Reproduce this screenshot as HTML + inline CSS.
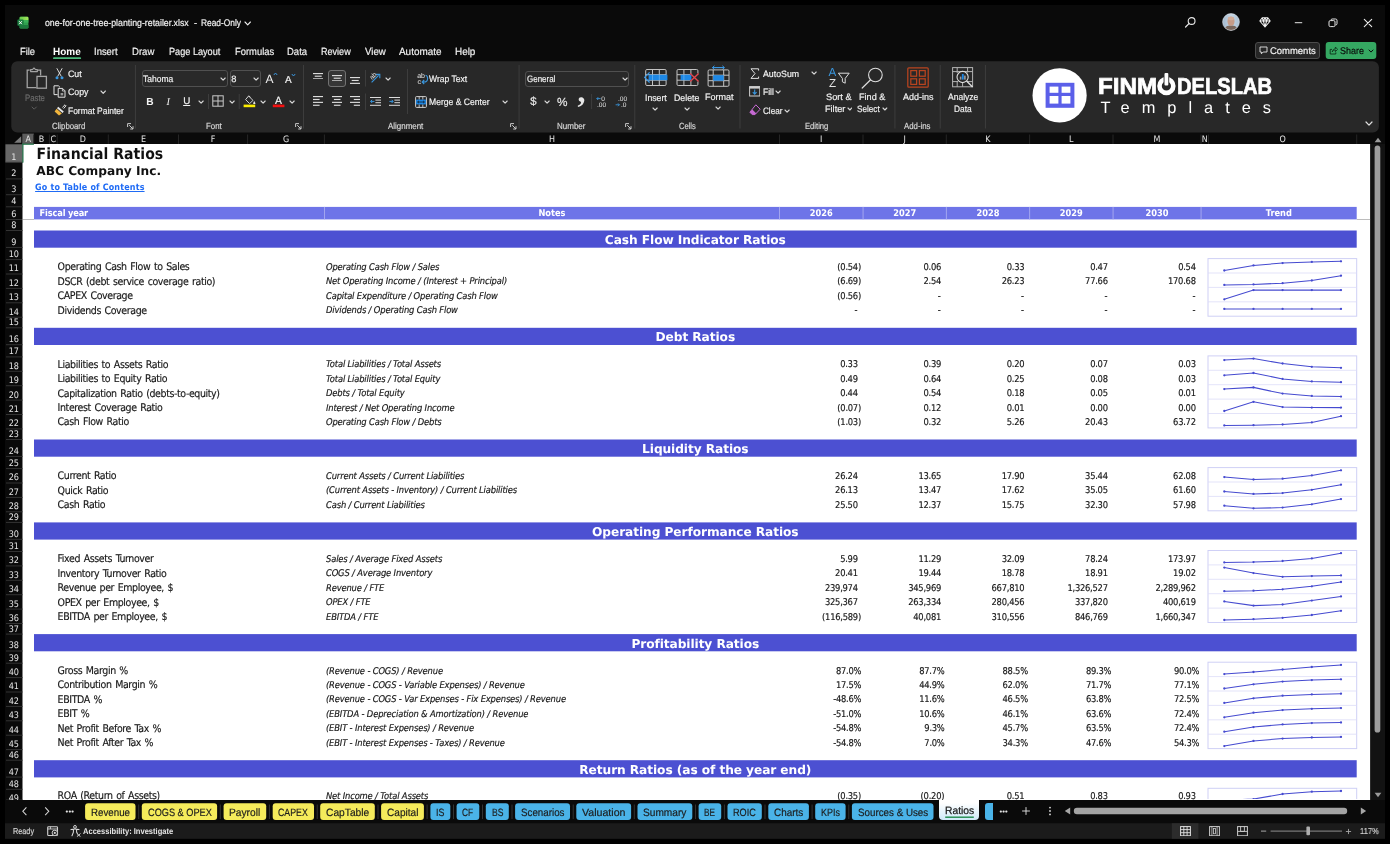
<!DOCTYPE html>
<html lang="en"><head><meta charset="utf-8"><title>Financial Ratios - Excel</title>
<style>
html,body{margin:0;padding:0}
body{width:1390px;height:844px;overflow:hidden;background:#000;position:relative}
#root{position:absolute;left:0;top:0;width:1390px;height:844px;will-change:transform}
#root>div,#root>svg,#root>span{position:absolute;display:block}
.t{white-space:nowrap;line-height:20px;height:20px;text-rendering:geometricPrecision}
svg text{text-rendering:geometricPrecision}

</style></head>
<body>
<div id="root">
<svg style="left:0;top:0" width="1390" height="844" viewBox="0 0 1390 844"><rect x="5.00" y="5.00" width="1380.00" height="834.00" fill="#0a0a0a"/><rect x="11.30" y="61.30" width="1367.60" height="71.20" rx="6" fill="#282828"/><rect x="22.50" y="144.00" width="1348.00" height="656.00" fill="#fff"/><rect x="5.00" y="823.20" width="1380.00" height="15.60" fill="#1b1b1b"/><rect x="22.30" y="133.60" width="11.60" height="10.40" fill="#5c5c5c"/><rect x="33.20" y="134.50" width="1.00" height="9.50" fill="#262626"/><rect x="48.90" y="134.50" width="1.00" height="9.50" fill="#262626"/><rect x="56.70" y="134.50" width="1.00" height="9.50" fill="#262626"/><rect x="107.80" y="134.50" width="1.00" height="9.50" fill="#262626"/><rect x="178.00" y="134.50" width="1.00" height="9.50" fill="#262626"/><rect x="247.10" y="134.50" width="1.00" height="9.50" fill="#262626"/><rect x="323.90" y="134.50" width="1.00" height="9.50" fill="#262626"/><rect x="779.00" y="134.50" width="1.00" height="9.50" fill="#262626"/><rect x="862.50" y="134.50" width="1.00" height="9.50" fill="#262626"/><rect x="945.80" y="134.50" width="1.00" height="9.50" fill="#262626"/><rect x="1029.10" y="134.50" width="1.00" height="9.50" fill="#262626"/><rect x="1112.50" y="134.50" width="1.00" height="9.50" fill="#262626"/><rect x="1200.50" y="134.50" width="1.00" height="9.50" fill="#262626"/><rect x="1208.00" y="134.50" width="1.00" height="9.50" fill="#262626"/><rect x="1356.20" y="134.50" width="1.00" height="9.50" fill="#262626"/></svg>
<svg style="left:12.0px;top:134.0px;" width="11" height="10" viewBox="0 0 11 10"><path d="M9.2 2.2 L9.2 8.7 L2.2 8.7 Z" fill="#7a7a7a"/></svg>
<svg style="left:0;top:0" width="1390" height="844" viewBox="0 0 1390 844"><rect x="5.40" y="144.30" width="16.80" height="18.20" fill="#676767"/><rect x="6.00" y="161.80" width="16.50" height="1.00" fill="#333"/><rect x="6.00" y="178.40" width="16.50" height="1.00" fill="#333"/><rect x="6.00" y="194.20" width="16.50" height="1.00" fill="#333"/><rect x="6.00" y="206.30" width="16.50" height="1.00" fill="#333"/><rect x="6.00" y="219.00" width="16.50" height="1.00" fill="#333"/><rect x="6.00" y="230.00" width="16.50" height="1.00" fill="#333"/><rect x="6.00" y="246.90" width="16.50" height="1.00" fill="#333"/><rect x="6.00" y="259.10" width="16.50" height="1.00" fill="#333"/><rect x="6.00" y="273.50" width="16.50" height="1.00" fill="#333"/><rect x="6.00" y="287.90" width="16.50" height="1.00" fill="#333"/><rect x="6.00" y="302.30" width="16.50" height="1.00" fill="#333"/><rect x="6.00" y="316.70" width="16.50" height="1.00" fill="#333"/><rect x="6.00" y="327.30" width="16.50" height="1.00" fill="#333"/><rect x="6.00" y="344.20" width="16.50" height="1.00" fill="#333"/><rect x="6.00" y="356.40" width="16.50" height="1.00" fill="#333"/><rect x="6.00" y="370.80" width="16.50" height="1.00" fill="#333"/><rect x="6.00" y="385.20" width="16.50" height="1.00" fill="#333"/><rect x="6.00" y="399.60" width="16.50" height="1.00" fill="#333"/><rect x="6.00" y="414.00" width="16.50" height="1.00" fill="#333"/><rect x="6.00" y="428.40" width="16.50" height="1.00" fill="#333"/><rect x="6.00" y="439.00" width="16.50" height="1.00" fill="#333"/><rect x="6.00" y="455.90" width="16.50" height="1.00" fill="#333"/><rect x="6.00" y="468.10" width="16.50" height="1.00" fill="#333"/><rect x="6.00" y="482.50" width="16.50" height="1.00" fill="#333"/><rect x="6.00" y="496.90" width="16.50" height="1.00" fill="#333"/><rect x="6.00" y="511.30" width="16.50" height="1.00" fill="#333"/><rect x="6.00" y="521.90" width="16.50" height="1.00" fill="#333"/><rect x="6.00" y="538.80" width="16.50" height="1.00" fill="#333"/><rect x="6.00" y="551.00" width="16.50" height="1.00" fill="#333"/><rect x="6.00" y="565.40" width="16.50" height="1.00" fill="#333"/><rect x="6.00" y="579.80" width="16.50" height="1.00" fill="#333"/><rect x="6.00" y="594.20" width="16.50" height="1.00" fill="#333"/><rect x="6.00" y="608.60" width="16.50" height="1.00" fill="#333"/><rect x="6.00" y="623.00" width="16.50" height="1.00" fill="#333"/><rect x="6.00" y="633.60" width="16.50" height="1.00" fill="#333"/><rect x="6.00" y="650.50" width="16.50" height="1.00" fill="#333"/><rect x="6.00" y="662.70" width="16.50" height="1.00" fill="#333"/><rect x="6.00" y="677.10" width="16.50" height="1.00" fill="#333"/><rect x="6.00" y="691.50" width="16.50" height="1.00" fill="#333"/><rect x="6.00" y="705.90" width="16.50" height="1.00" fill="#333"/><rect x="6.00" y="720.30" width="16.50" height="1.00" fill="#333"/><rect x="6.00" y="734.70" width="16.50" height="1.00" fill="#333"/><rect x="6.00" y="749.10" width="16.50" height="1.00" fill="#333"/><rect x="6.00" y="759.70" width="16.50" height="1.00" fill="#333"/><rect x="6.00" y="776.60" width="16.50" height="1.00" fill="#333"/><rect x="6.00" y="788.80" width="16.50" height="1.00" fill="#333"/><rect x="6.00" y="799.50" width="16.50" height="1.00" fill="#333"/><rect x="22.30" y="143.60" width="11.60" height="1.20" fill="#1e7145"/><rect x="22.30" y="143.60" width="1.20" height="19.00" fill="#1e7145"/><rect x="34.00" y="206.90" width="1322.70" height="12.50" fill="#6e74e8"/><rect x="324.00" y="206.90" width="0.90" height="12.50" fill="#a9abf0"/><rect x="779.10" y="206.90" width="0.90" height="12.50" fill="#a9abf0"/><rect x="862.60" y="206.90" width="0.90" height="12.50" fill="#a9abf0"/><rect x="945.90" y="206.90" width="0.90" height="12.50" fill="#a9abf0"/><rect x="1029.20" y="206.90" width="0.90" height="12.50" fill="#a9abf0"/><rect x="1112.60" y="206.90" width="0.90" height="12.50" fill="#a9abf0"/><rect x="1200.60" y="206.90" width="0.90" height="12.50" fill="#a9abf0"/><rect x="22.50" y="219.00" width="11.50" height="0.90" fill="#b5b5b5"/><rect x="1356.70" y="219.00" width="13.80" height="0.90" fill="#b5b5b5"/><rect x="34.00" y="230.50" width="1322.70" height="17.20" fill="#4c50d2"/><rect x="34.00" y="327.80" width="1322.70" height="17.20" fill="#4c50d2"/><rect x="34.00" y="439.50" width="1322.70" height="17.20" fill="#4c50d2"/><rect x="34.00" y="522.40" width="1322.70" height="17.20" fill="#4c50d2"/><rect x="34.00" y="634.10" width="1322.70" height="17.20" fill="#4c50d2"/><rect x="34.00" y="760.20" width="1322.70" height="17.20" fill="#4c50d2"/></svg>
<svg style="left:0;top:-0.6px" width="1390" height="800" viewBox="0 0 1390 800"><rect x="1208" y="259.6" width="148.7" height="57.6" fill="none" stroke="#cfd0f6" stroke-width="1"/><line x1="1208" y1="274.0" x2="1356.7" y2="274.0" stroke="#dcdcf8" stroke-width="0.8"/><line x1="1208" y1="288.4" x2="1356.7" y2="288.4" stroke="#dcdcf8" stroke-width="0.8"/><line x1="1208" y1="302.8" x2="1356.7" y2="302.8" stroke="#dcdcf8" stroke-width="0.8"/><polyline fill="none" stroke="#454ad0" stroke-width="1.05" points="1224.3,271.5 1253.5,266.4 1282.6,264.1 1311.8,262.9 1341.0,262.3"/><circle cx="1224.3" cy="271.5" r="1.15" fill="#454ad0"/><circle cx="1253.5" cy="266.4" r="1.15" fill="#454ad0"/><circle cx="1282.6" cy="264.1" r="1.15" fill="#454ad0"/><circle cx="1311.8" cy="262.9" r="1.15" fill="#454ad0"/><circle cx="1341.0" cy="262.3" r="1.15" fill="#454ad0"/><polyline fill="none" stroke="#454ad0" stroke-width="1.05" points="1224.3,285.9 1253.5,285.4 1282.6,284.2 1311.8,281.5 1341.0,276.7"/><circle cx="1224.3" cy="285.9" r="1.15" fill="#454ad0"/><circle cx="1253.5" cy="285.4" r="1.15" fill="#454ad0"/><circle cx="1282.6" cy="284.2" r="1.15" fill="#454ad0"/><circle cx="1311.8" cy="281.5" r="1.15" fill="#454ad0"/><circle cx="1341.0" cy="276.7" r="1.15" fill="#454ad0"/><polyline fill="none" stroke="#454ad0" stroke-width="1.05" points="1224.3,300.3 1253.5,291.1 1282.6,291.1 1311.8,291.1 1341.0,291.1"/><circle cx="1224.3" cy="300.3" r="1.15" fill="#454ad0"/><circle cx="1253.5" cy="291.1" r="1.15" fill="#454ad0"/><circle cx="1282.6" cy="291.1" r="1.15" fill="#454ad0"/><circle cx="1311.8" cy="291.1" r="1.15" fill="#454ad0"/><circle cx="1341.0" cy="291.1" r="1.15" fill="#454ad0"/><polyline fill="none" stroke="#454ad0" stroke-width="1.05" points="1224.3,309.9 1253.5,309.9 1282.6,309.9 1311.8,309.9 1341.0,309.9"/><circle cx="1224.3" cy="309.9" r="1.15" fill="#454ad0"/><circle cx="1253.5" cy="309.9" r="1.15" fill="#454ad0"/><circle cx="1282.6" cy="309.9" r="1.15" fill="#454ad0"/><circle cx="1311.8" cy="309.9" r="1.15" fill="#454ad0"/><circle cx="1341.0" cy="309.9" r="1.15" fill="#454ad0"/><rect x="1208" y="356.9" width="148.7" height="72.0" fill="none" stroke="#cfd0f6" stroke-width="1"/><line x1="1208" y1="371.3" x2="1356.7" y2="371.3" stroke="#dcdcf8" stroke-width="0.8"/><line x1="1208" y1="385.7" x2="1356.7" y2="385.7" stroke="#dcdcf8" stroke-width="0.8"/><line x1="1208" y1="400.1" x2="1356.7" y2="400.1" stroke="#dcdcf8" stroke-width="0.8"/><line x1="1208" y1="414.5" x2="1356.7" y2="414.5" stroke="#dcdcf8" stroke-width="0.8"/><polyline fill="none" stroke="#454ad0" stroke-width="1.05" points="1224.3,361.1 1253.5,359.6 1282.6,364.5 1311.8,367.8 1341.0,368.8"/><circle cx="1224.3" cy="361.1" r="1.15" fill="#454ad0"/><circle cx="1253.5" cy="359.6" r="1.15" fill="#454ad0"/><circle cx="1282.6" cy="364.5" r="1.15" fill="#454ad0"/><circle cx="1311.8" cy="367.8" r="1.15" fill="#454ad0"/><circle cx="1341.0" cy="368.8" r="1.15" fill="#454ad0"/><polyline fill="none" stroke="#454ad0" stroke-width="1.05" points="1224.3,376.3 1253.5,374.0 1282.6,379.9 1311.8,382.4 1341.0,383.2"/><circle cx="1224.3" cy="376.3" r="1.15" fill="#454ad0"/><circle cx="1253.5" cy="374.0" r="1.15" fill="#454ad0"/><circle cx="1282.6" cy="379.9" r="1.15" fill="#454ad0"/><circle cx="1311.8" cy="382.4" r="1.15" fill="#454ad0"/><circle cx="1341.0" cy="383.2" r="1.15" fill="#454ad0"/><polyline fill="none" stroke="#454ad0" stroke-width="1.05" points="1224.3,390.1 1253.5,388.4 1282.6,394.6 1311.8,396.9 1341.0,397.6"/><circle cx="1224.3" cy="390.1" r="1.15" fill="#454ad0"/><circle cx="1253.5" cy="388.4" r="1.15" fill="#454ad0"/><circle cx="1282.6" cy="394.6" r="1.15" fill="#454ad0"/><circle cx="1311.8" cy="396.9" r="1.15" fill="#454ad0"/><circle cx="1341.0" cy="397.6" r="1.15" fill="#454ad0"/><polyline fill="none" stroke="#454ad0" stroke-width="1.05" points="1224.3,412.0 1253.5,402.8 1282.6,408.1 1311.8,408.6 1341.0,408.6"/><circle cx="1224.3" cy="412.0" r="1.15" fill="#454ad0"/><circle cx="1253.5" cy="402.8" r="1.15" fill="#454ad0"/><circle cx="1282.6" cy="408.1" r="1.15" fill="#454ad0"/><circle cx="1311.8" cy="408.6" r="1.15" fill="#454ad0"/><circle cx="1341.0" cy="408.6" r="1.15" fill="#454ad0"/><polyline fill="none" stroke="#454ad0" stroke-width="1.05" points="1224.3,426.4 1253.5,426.2 1282.6,425.5 1311.8,423.4 1341.0,417.2"/><circle cx="1224.3" cy="426.4" r="1.15" fill="#454ad0"/><circle cx="1253.5" cy="426.2" r="1.15" fill="#454ad0"/><circle cx="1282.6" cy="425.5" r="1.15" fill="#454ad0"/><circle cx="1311.8" cy="423.4" r="1.15" fill="#454ad0"/><circle cx="1341.0" cy="417.2" r="1.15" fill="#454ad0"/><rect x="1208" y="468.6" width="148.7" height="43.2" fill="none" stroke="#cfd0f6" stroke-width="1"/><line x1="1208" y1="483.0" x2="1356.7" y2="483.0" stroke="#dcdcf8" stroke-width="0.8"/><line x1="1208" y1="497.4" x2="1356.7" y2="497.4" stroke="#dcdcf8" stroke-width="0.8"/><polyline fill="none" stroke="#454ad0" stroke-width="1.05" points="1224.3,478.1 1253.5,480.5 1282.6,479.7 1311.8,476.4 1341.0,471.3"/><circle cx="1224.3" cy="478.1" r="1.15" fill="#454ad0"/><circle cx="1253.5" cy="480.5" r="1.15" fill="#454ad0"/><circle cx="1282.6" cy="479.7" r="1.15" fill="#454ad0"/><circle cx="1311.8" cy="476.4" r="1.15" fill="#454ad0"/><circle cx="1341.0" cy="471.3" r="1.15" fill="#454ad0"/><polyline fill="none" stroke="#454ad0" stroke-width="1.05" points="1224.3,492.5 1253.5,494.9 1282.6,494.1 1311.8,490.8 1341.0,485.7"/><circle cx="1224.3" cy="492.5" r="1.15" fill="#454ad0"/><circle cx="1253.5" cy="494.9" r="1.15" fill="#454ad0"/><circle cx="1282.6" cy="494.1" r="1.15" fill="#454ad0"/><circle cx="1311.8" cy="490.8" r="1.15" fill="#454ad0"/><circle cx="1341.0" cy="485.7" r="1.15" fill="#454ad0"/><polyline fill="none" stroke="#454ad0" stroke-width="1.05" points="1224.3,506.7 1253.5,509.3 1282.6,508.6 1311.8,505.3 1341.0,500.1"/><circle cx="1224.3" cy="506.7" r="1.15" fill="#454ad0"/><circle cx="1253.5" cy="509.3" r="1.15" fill="#454ad0"/><circle cx="1282.6" cy="508.6" r="1.15" fill="#454ad0"/><circle cx="1311.8" cy="505.3" r="1.15" fill="#454ad0"/><circle cx="1341.0" cy="500.1" r="1.15" fill="#454ad0"/><rect x="1208" y="551.5" width="148.7" height="72.0" fill="none" stroke="#cfd0f6" stroke-width="1"/><line x1="1208" y1="565.9" x2="1356.7" y2="565.9" stroke="#dcdcf8" stroke-width="0.8"/><line x1="1208" y1="580.3" x2="1356.7" y2="580.3" stroke="#dcdcf8" stroke-width="0.8"/><line x1="1208" y1="594.7" x2="1356.7" y2="594.7" stroke="#dcdcf8" stroke-width="0.8"/><line x1="1208" y1="609.1" x2="1356.7" y2="609.1" stroke="#dcdcf8" stroke-width="0.8"/><polyline fill="none" stroke="#454ad0" stroke-width="1.05" points="1224.3,563.4 1253.5,563.1 1282.6,562.0 1311.8,559.4 1341.0,554.2"/><circle cx="1224.3" cy="563.4" r="1.15" fill="#454ad0"/><circle cx="1253.5" cy="563.1" r="1.15" fill="#454ad0"/><circle cx="1282.6" cy="562.0" r="1.15" fill="#454ad0"/><circle cx="1311.8" cy="559.4" r="1.15" fill="#454ad0"/><circle cx="1341.0" cy="554.2" r="1.15" fill="#454ad0"/><polyline fill="none" stroke="#454ad0" stroke-width="1.05" points="1224.3,568.6 1253.5,574.1 1282.6,577.8 1311.8,577.1 1341.0,576.4"/><circle cx="1224.3" cy="568.6" r="1.15" fill="#454ad0"/><circle cx="1253.5" cy="574.1" r="1.15" fill="#454ad0"/><circle cx="1282.6" cy="577.8" r="1.15" fill="#454ad0"/><circle cx="1311.8" cy="577.1" r="1.15" fill="#454ad0"/><circle cx="1341.0" cy="576.4" r="1.15" fill="#454ad0"/><polyline fill="none" stroke="#454ad0" stroke-width="1.05" points="1224.3,592.2 1253.5,591.7 1282.6,590.3 1311.8,587.3 1341.0,583.0"/><circle cx="1224.3" cy="592.2" r="1.15" fill="#454ad0"/><circle cx="1253.5" cy="591.7" r="1.15" fill="#454ad0"/><circle cx="1282.6" cy="590.3" r="1.15" fill="#454ad0"/><circle cx="1311.8" cy="587.3" r="1.15" fill="#454ad0"/><circle cx="1341.0" cy="583.0" r="1.15" fill="#454ad0"/><polyline fill="none" stroke="#454ad0" stroke-width="1.05" points="1224.3,602.4 1253.5,606.6 1282.6,605.5 1311.8,601.6 1341.0,597.4"/><circle cx="1224.3" cy="602.4" r="1.15" fill="#454ad0"/><circle cx="1253.5" cy="606.6" r="1.15" fill="#454ad0"/><circle cx="1282.6" cy="605.5" r="1.15" fill="#454ad0"/><circle cx="1311.8" cy="601.6" r="1.15" fill="#454ad0"/><circle cx="1341.0" cy="597.4" r="1.15" fill="#454ad0"/><polyline fill="none" stroke="#454ad0" stroke-width="1.05" points="1224.3,621.0 1253.5,620.2 1282.6,618.8 1311.8,616.0 1341.0,611.8"/><circle cx="1224.3" cy="621.0" r="1.15" fill="#454ad0"/><circle cx="1253.5" cy="620.2" r="1.15" fill="#454ad0"/><circle cx="1282.6" cy="618.8" r="1.15" fill="#454ad0"/><circle cx="1311.8" cy="616.0" r="1.15" fill="#454ad0"/><circle cx="1341.0" cy="611.8" r="1.15" fill="#454ad0"/><rect x="1208" y="663.2" width="148.7" height="86.4" fill="none" stroke="#cfd0f6" stroke-width="1"/><line x1="1208" y1="677.6" x2="1356.7" y2="677.6" stroke="#dcdcf8" stroke-width="0.8"/><line x1="1208" y1="692.0" x2="1356.7" y2="692.0" stroke="#dcdcf8" stroke-width="0.8"/><line x1="1208" y1="706.4" x2="1356.7" y2="706.4" stroke="#dcdcf8" stroke-width="0.8"/><line x1="1208" y1="720.8" x2="1356.7" y2="720.8" stroke="#dcdcf8" stroke-width="0.8"/><line x1="1208" y1="735.2" x2="1356.7" y2="735.2" stroke="#dcdcf8" stroke-width="0.8"/><polyline fill="none" stroke="#454ad0" stroke-width="1.05" points="1224.3,675.1 1253.5,673.0 1282.6,670.5 1311.8,668.0 1341.0,665.9"/><circle cx="1224.3" cy="675.1" r="1.15" fill="#454ad0"/><circle cx="1253.5" cy="673.0" r="1.15" fill="#454ad0"/><circle cx="1282.6" cy="670.5" r="1.15" fill="#454ad0"/><circle cx="1311.8" cy="668.0" r="1.15" fill="#454ad0"/><circle cx="1341.0" cy="665.9" r="1.15" fill="#454ad0"/><polyline fill="none" stroke="#454ad0" stroke-width="1.05" points="1224.3,689.5 1253.5,685.3 1282.6,682.6 1311.8,681.1 1341.0,680.3"/><circle cx="1224.3" cy="689.5" r="1.15" fill="#454ad0"/><circle cx="1253.5" cy="685.3" r="1.15" fill="#454ad0"/><circle cx="1282.6" cy="682.6" r="1.15" fill="#454ad0"/><circle cx="1311.8" cy="681.1" r="1.15" fill="#454ad0"/><circle cx="1341.0" cy="680.3" r="1.15" fill="#454ad0"/><polyline fill="none" stroke="#454ad0" stroke-width="1.05" points="1224.3,703.9 1253.5,699.3 1282.6,696.7 1311.8,695.4 1341.0,694.7"/><circle cx="1224.3" cy="703.9" r="1.15" fill="#454ad0"/><circle cx="1253.5" cy="699.3" r="1.15" fill="#454ad0"/><circle cx="1282.6" cy="696.7" r="1.15" fill="#454ad0"/><circle cx="1311.8" cy="695.4" r="1.15" fill="#454ad0"/><circle cx="1341.0" cy="694.7" r="1.15" fill="#454ad0"/><polyline fill="none" stroke="#454ad0" stroke-width="1.05" points="1224.3,718.3 1253.5,713.7 1282.6,711.1 1311.8,709.8 1341.0,709.1"/><circle cx="1224.3" cy="718.3" r="1.15" fill="#454ad0"/><circle cx="1253.5" cy="713.7" r="1.15" fill="#454ad0"/><circle cx="1282.6" cy="711.1" r="1.15" fill="#454ad0"/><circle cx="1311.8" cy="709.8" r="1.15" fill="#454ad0"/><circle cx="1341.0" cy="709.1" r="1.15" fill="#454ad0"/><polyline fill="none" stroke="#454ad0" stroke-width="1.05" points="1224.3,732.7 1253.5,728.1 1282.6,725.4 1311.8,724.1 1341.0,723.5"/><circle cx="1224.3" cy="732.7" r="1.15" fill="#454ad0"/><circle cx="1253.5" cy="728.1" r="1.15" fill="#454ad0"/><circle cx="1282.6" cy="725.4" r="1.15" fill="#454ad0"/><circle cx="1311.8" cy="724.1" r="1.15" fill="#454ad0"/><circle cx="1341.0" cy="723.5" r="1.15" fill="#454ad0"/><polyline fill="none" stroke="#454ad0" stroke-width="1.05" points="1224.3,747.1 1253.5,741.9 1282.6,739.6 1311.8,738.5 1341.0,737.9"/><circle cx="1224.3" cy="747.1" r="1.15" fill="#454ad0"/><circle cx="1253.5" cy="741.9" r="1.15" fill="#454ad0"/><circle cx="1282.6" cy="739.6" r="1.15" fill="#454ad0"/><circle cx="1311.8" cy="738.5" r="1.15" fill="#454ad0"/><circle cx="1341.0" cy="737.9" r="1.15" fill="#454ad0"/><rect x="1208" y="789.3" width="148.7" height="14.4" fill="none" stroke="#cfd0f6" stroke-width="1"/><polyline fill="none" stroke="#454ad0" stroke-width="1.05" points="1224.3,801.2 1253.5,800.1 1282.6,795.0 1311.8,792.7 1341.0,792.0"/><circle cx="1224.3" cy="801.2" r="1.15" fill="#454ad0"/><circle cx="1253.5" cy="800.1" r="1.15" fill="#454ad0"/><circle cx="1282.6" cy="795.0" r="1.15" fill="#454ad0"/><circle cx="1311.8" cy="792.7" r="1.15" fill="#454ad0"/><circle cx="1341.0" cy="792.0" r="1.15" fill="#454ad0"/></svg>
<svg style="left:0;top:0" width="1390" height="844" viewBox="0 0 1390 844"><rect x="5.00" y="800.00" width="1380.00" height="22.50" fill="#0a0a0a"/><rect x="1370.50" y="134.00" width="14.50" height="666.00" fill="#0a0a0a"/></svg>
<svg style="left:16.5px;top:15.8px;" width="12" height="13" viewBox="0 0 12 13"><defs><linearGradient id="xg" x1="0" y1="0" x2="1" y2="0"><stop offset="0" stop-color="#63c94a"/><stop offset="1" stop-color="#a6e75a"/></linearGradient></defs><rect x="2.6" y="0.8" width="8.8" height="11.6" rx="1.2" fill="#2fa04e"/><path d="M2.6 2 Q2.6 0.8 3.8 0.8 H10.2 Q11.4 0.8 11.4 2 V4.2 H2.6 Z" fill="url(#xg)"/><path d="M2.6 9 H11.4 V11.2 Q11.4 12.4 10.2 12.4 H3.8 Q2.6 12.4 2.6 11.2 Z" fill="#1d7a3e"/><rect x="7" y="4.2" width="4.4" height="2.4" fill="#3bb25a"/><rect x="0.4" y="3.6" width="6.2" height="6.2" rx="0.8" fill="#1b7f41"/><path d="M2.1 5.2 L4.9 8.2 M4.9 5.2 L2.1 8.2" stroke="#fff" stroke-width="1"/></svg>
<svg style="left:244.1px;top:20.8px;" width="7.4" height="4.8" viewBox="0 0 7.4 4.8"><path d="M1 1 L3.70 3.80 L6.40 1" fill="none" stroke="#f2f2f2" stroke-width="1.1" stroke-linecap="round" stroke-linejoin="round"/></svg>
<svg style="left:1184.0px;top:16.0px;" width="13" height="13" viewBox="0 0 13 13"><circle cx="7.6" cy="5" r="3.4" fill="none" stroke="#e8e8e8" stroke-width="1.1"/><path d="M5.2 7.4 L1.6 11" stroke="#e8e8e8" stroke-width="1.2" stroke-linecap="round"/></svg>
<svg style="left:1222.3px;top:13.1px;" width="18" height="18" viewBox="0 0 18 18"><defs><clipPath id="av"><circle cx="9" cy="9" r="8.4"/></clipPath><linearGradient id="avb" x1="0" y1="0" x2="1" y2="0"><stop offset="0" stop-color="#9fb6cc"/><stop offset="0.5" stop-color="#c6d6e4"/><stop offset="1" stop-color="#a9bfd3"/></linearGradient></defs><g clip-path="url(#av)"><rect width="18" height="18" fill="url(#avb)"/><path d="M2 18 C2.4 13.6 5.6 12.6 9 12.6 C12.4 12.6 15.6 13.6 16 18 Z" fill="#7a675c"/><ellipse cx="9" cy="8.2" rx="3.5" ry="4.5" fill="#c79c88"/><ellipse cx="9" cy="5.4" rx="3.2" ry="1.8" fill="#d3ad9a"/></g><circle cx="9" cy="9" r="8.4" fill="none" stroke="#e4e8ee" stroke-width="0.6"/></svg>
<svg style="left:1259.0px;top:16.5px;" width="12" height="11" viewBox="0 0 12 11"><path d="M3.2 0.8 H8.8 L11.2 4 L6 10 L0.8 4 Z M0.8 4 H11.2 M3.2 0.8 L4.4 4 L6 10 L7.6 4 L8.8 0.8 M4.4 4 L6 0.8 L7.6 4" fill="none" stroke="#f2f2f2" stroke-width="1.05" stroke-linejoin="round"/></svg>
<svg style="left:0;top:0" width="1390" height="844" viewBox="0 0 1390 844"><rect x="1294.80" y="22.20" width="7.40" height="1.00" fill="#e6e6e6"/></svg>
<svg style="left:1328.0px;top:17.5px;" width="10" height="10" viewBox="0 0 10 10"><rect x="1" y="2.6" width="6" height="6" rx="1.3" fill="none" stroke="#e6e6e6" stroke-width="1"/><path d="M3 2.4 V2.2 Q3 1 4.2 1 H7.6 Q9 1 9 2.4 V5.6 Q9 7 7.6 7" fill="none" stroke="#e6e6e6" stroke-width="1"/></svg>
<svg style="left:1362.5px;top:17.5px;" width="10" height="10" viewBox="0 0 10 10"><path d="M1.3 1.3 L8.7 8.7 M8.7 1.3 L1.3 8.7" stroke="#ececec" stroke-width="1.1" stroke-linecap="round"/></svg>
<svg style="left:0;top:0" width="1390" height="844" viewBox="0 0 1390 844"><rect x="53.00" y="57.30" width="28.10" height="1.80" rx="1" fill="#4cb97c"/></svg>
<div style="left:1255.2px;top:42.0px;width:64.6px;height:17.0px;background:#262626;border:1px solid #4c4c4c;border-radius:3px;box-sizing:border-box"></div>
<svg style="left:1258.8px;top:46.0px;" width="9" height="9" viewBox="0 0 9 9"><path d="M1 1 H8 V6 H4.2 L2.4 7.8 V6 H1 Z" fill="none" stroke="#e6e6e6" stroke-width="0.9" stroke-linejoin="round"/></svg>
<svg style="left:0;top:0" width="1390" height="844" viewBox="0 0 1390 844"><rect x="1325.70" y="42.00" width="50.60" height="17.00" rx="3" fill="#35a862"/></svg>
<svg style="left:1328.6px;top:45.6px;" width="9" height="9" viewBox="0 0 9 9"><path d="M3 3.4 H1.2 V8 H6.8 V6.4" fill="none" stroke="#0c2d18" stroke-width="0.9"/><path d="M3.2 6 C3.4 3.8 5 2.8 6.4 2.8 V1 L8.6 3.4 L6.4 5.6 V4 C5 4 4 4.6 3.2 6 Z" fill="none" stroke="#0c2d18" stroke-width="0.8" stroke-linejoin="round"/></svg>
<svg style="left:1367.9px;top:49.0px;" width="6" height="4.1" viewBox="0 0 6 4.1"><path d="M1 1 L3.00 3.10 L5.00 1" fill="none" stroke="#0b0b0b" stroke-width="1" stroke-linecap="round" stroke-linejoin="round"/></svg>
<svg style="left:25.5px;top:67.0px;" width="22" height="23" viewBox="0 0 22 23"><path d="M3.6 3.2 H1.2 V20.6 H10.4 M12 3.2 H14.6 V8.6" fill="none" stroke="#a4a4a4" stroke-width="1.3"/><path d="M4.6 4.6 V2.6 H6.4 L8 1 L9.6 2.6 H11.4 V4.6 Z" fill="none" stroke="#a4a4a4" stroke-width="1.1" stroke-linejoin="round"/><rect x="11" y="9.4" width="9.4" height="11.8" fill="#282828" stroke="#a4a4a4" stroke-width="1.3"/></svg>
<svg style="left:31.3px;top:106.3px;" width="6.4" height="4.2" viewBox="0 0 6.4 4.2"><path d="M1 1 L3.20 3.20 L5.40 1" fill="none" stroke="#5c5c5c" stroke-width="1" stroke-linecap="round" stroke-linejoin="round"/></svg>
<svg style="left:55.0px;top:67.5px;" width="9" height="12" viewBox="0 0 9 12"><path d="M2 0.6 L6.2 8.2 M7 0.6 L2.8 8.2" stroke="#e8e8e8" stroke-width="0.9" stroke-linecap="round"/><circle cx="2" cy="9.8" r="1.5" fill="#3a96dd"/><circle cx="7" cy="9.8" r="1.5" fill="#3a96dd"/></svg>
<svg style="left:52.8px;top:85.2px;" width="13" height="13" viewBox="0 0 13 13"><path d="M4.6 9.6 H1 V0.8 H5.4 L7 2.4" fill="none" stroke="#e2e2e2" stroke-width="1" stroke-linejoin="round"/><path d="M5.2 3.4 H9.6 L12 5.8 V12.2 H5.2 Z" fill="#282828" stroke="#e2e2e2" stroke-width="1" stroke-linejoin="round"/><path d="M9.4 3.6 V6 H11.8" fill="none" stroke="#e2e2e2" stroke-width="0.8"/><rect x="7.6" y="8" width="2.6" height="2.4" fill="#9a9a9a"/></svg>
<svg style="left:99.9px;top:89.8px;" width="6.4" height="4.3" viewBox="0 0 6.4 4.3"><path d="M1 1 L3.20 3.30 L5.40 1" fill="none" stroke="#d8d8d8" stroke-width="1.1" stroke-linecap="round" stroke-linejoin="round"/></svg>
<svg style="left:53.5px;top:104.0px;" width="13" height="12" viewBox="0 0 13 12"><path d="M8.4 3.4 L11 0.8 L12 1.8 L9.6 4.6" fill="none" stroke="#e6e6e6" stroke-width="1"/><path d="M4.2 2.8 L9.8 7.6 L8.6 9 L3 4.2 Z" fill="#e6e6e6"/><path d="M2.6 4.8 L7.8 9.4 L5 11.4 L0.6 7.6 Z" fill="#f0b43c"/></svg>
<svg style="left:126.5px;top:122.8px;" width="7" height="7" viewBox="0 0 7 7"><path d="M0.6 4 V0.6 H4" fill="none" stroke="#c8c8c8" stroke-width="1"/><path d="M2.2 2.2 L6 6 M6 3.2 V6 H3.2" fill="none" stroke="#c8c8c8" stroke-width="1"/></svg>
<svg style="left:0;top:0" width="1390" height="844" viewBox="0 0 1390 844"><rect x="134.90" y="65.00" width="1.00" height="63.50" fill="#3d3d3d"/></svg>
<div style="left:141.5px;top:70.4px;width:86.0px;height:16.6px;background:#292929;border:1px solid #505050;border-radius:3px;box-sizing:border-box"></div>
<svg style="left:220.3px;top:76.7px;" width="6.2" height="4.2" viewBox="0 0 6.2 4.2"><path d="M1 1 L3.10 3.20 L5.20 1" fill="none" stroke="#d8d8d8" stroke-width="1.1" stroke-linecap="round" stroke-linejoin="round"/></svg>
<div style="left:229.6px;top:70.4px;width:31.0px;height:16.6px;background:#292929;border:1px solid #505050;border-radius:3px;box-sizing:border-box"></div>
<svg style="left:253.2px;top:76.7px;" width="6.2" height="4.2" viewBox="0 0 6.2 4.2"><path d="M1 1 L3.10 3.20 L5.20 1" fill="none" stroke="#d8d8d8" stroke-width="1.1" stroke-linecap="round" stroke-linejoin="round"/></svg>
<svg style="left:273.3px;top:72.2px;" width="5" height="4" viewBox="0 0 5 4"><path d="M0.8 3 L2.5 1 L4.2 3" fill="none" stroke="#3a96dd" stroke-width="1"/></svg>
<svg style="left:291.3px;top:72.6px;" width="5" height="4" viewBox="0 0 5 4"><path d="M0.8 1 L2.5 3 L4.2 1" fill="none" stroke="#3a96dd" stroke-width="1"/></svg>
<svg style="left:197.6px;top:99.5px;" width="6.2" height="4.2" viewBox="0 0 6.2 4.2"><path d="M1 1 L3.10 3.20 L5.20 1" fill="none" stroke="#d8d8d8" stroke-width="1.1" stroke-linecap="round" stroke-linejoin="round"/></svg>
<svg style="left:0;top:0" width="1390" height="844" viewBox="0 0 1390 844"><rect x="208.00" y="94.00" width="1.00" height="15.00" fill="#3d3d3d"/></svg>
<svg style="left:212.4px;top:95.4px;" width="12" height="12" viewBox="0 0 12 12"><rect x="0.8" y="0.8" width="10.4" height="10.4" fill="none" stroke="#c9c9c9" stroke-width="1"/><path d="M6 0.8 V11.2 M0.8 6 H11.2" stroke="#c9c9c9" stroke-width="1"/></svg>
<svg style="left:228.8px;top:99.5px;" width="6.2" height="4.2" viewBox="0 0 6.2 4.2"><path d="M1 1 L3.10 3.20 L5.20 1" fill="none" stroke="#d8d8d8" stroke-width="1.1" stroke-linecap="round" stroke-linejoin="round"/></svg>
<svg style="left:0;top:0" width="1390" height="844" viewBox="0 0 1390 844"><rect x="238.70" y="94.00" width="1.00" height="15.00" fill="#3d3d3d"/></svg>
<svg style="left:243.6px;top:94.6px;" width="12" height="9.6" viewBox="0 0 12 9.6"><path d="M4.6 1 L9 5.4 L5.6 8.6 L1.6 4.6 Z" fill="none" stroke="#e4e4e4" stroke-width="0.9" stroke-linejoin="round"/><path d="M4.8 0.6 L6.4 2.4" stroke="#e4e4e4" stroke-width="0.9"/><path d="M10.2 6 C10.2 6 11.4 7.6 11.4 8.3 A1.1 1.1 0 0 1 9.2 8.3 C9.2 7.6 10.2 6 10.2 6Z" fill="#e4e4e4"/></svg>
<svg style="left:0;top:0" width="1390" height="844" viewBox="0 0 1390 844"><rect x="243.60" y="104.60" width="11.60" height="2.60" fill="#fbec00"/></svg>
<svg style="left:260.1px;top:99.5px;" width="6.2" height="4.2" viewBox="0 0 6.2 4.2"><path d="M1 1 L3.10 3.20 L5.20 1" fill="none" stroke="#d8d8d8" stroke-width="1.1" stroke-linecap="round" stroke-linejoin="round"/></svg>
<svg style="left:0;top:0" width="1390" height="844" viewBox="0 0 1390 844"><rect x="272.80" y="104.60" width="11.60" height="2.60" fill="#f40f0f"/></svg>
<svg style="left:289.0px;top:99.5px;" width="6.2" height="4.2" viewBox="0 0 6.2 4.2"><path d="M1 1 L3.10 3.20 L5.20 1" fill="none" stroke="#d8d8d8" stroke-width="1.1" stroke-linecap="round" stroke-linejoin="round"/></svg>
<svg style="left:294.5px;top:122.8px;" width="7" height="7" viewBox="0 0 7 7"><path d="M0.6 4 V0.6 H4" fill="none" stroke="#c8c8c8" stroke-width="1"/><path d="M2.2 2.2 L6 6 M6 3.2 V6 H3.2" fill="none" stroke="#c8c8c8" stroke-width="1"/></svg>
<svg style="left:0;top:0" width="1390" height="844" viewBox="0 0 1390 844"><rect x="303.00" y="65.00" width="1.00" height="63.50" fill="#3d3d3d"/></svg>
<div style="left:328.4px;top:69.9px;width:17.4px;height:17.1px;background:#363636;border:1px solid #727272;border-radius:3px;box-sizing:border-box"></div>
<svg style="left:312.9px;top:72.8px;" width="10.4" height="6.6499999999999995" viewBox="0 0 10.4 6.6499999999999995"><rect x="0.0" y="0.00" width="10.4" height="1.15" fill="#dcdcdc"/><rect x="1.7" y="2.65" width="7" height="1.15" fill="#dcdcdc"/><rect x="0.0" y="5.30" width="10.4" height="1.15" fill="#dcdcdc"/></svg>
<svg style="left:331.7px;top:74.8px;" width="10.4" height="6.6499999999999995" viewBox="0 0 10.4 6.6499999999999995"><rect x="0.0" y="0.00" width="10.4" height="1.15" fill="#dcdcdc"/><rect x="1.7" y="2.65" width="7" height="1.15" fill="#dcdcdc"/><rect x="0.0" y="5.30" width="10.4" height="1.15" fill="#dcdcdc"/></svg>
<svg style="left:350.0px;top:77.3px;" width="10.4" height="7.1499999999999995" viewBox="0 0 10.4 7.1499999999999995"><rect x="0.0" y="0.00" width="10.4" height="1.15" fill="#dcdcdc"/><rect x="1.7" y="2.90" width="7" height="1.15" fill="#dcdcdc"/><rect x="0.0" y="5.80" width="10.4" height="1.15" fill="#dcdcdc"/></svg>
<svg style="left:0;top:0" width="1390" height="844" viewBox="0 0 1390 844"><rect x="365.00" y="70.00" width="1.00" height="16.60" fill="#3d3d3d"/></svg>
<svg style="left:369.6px;top:72.0px;" width="13" height="12" viewBox="0 0 13 12"><path d="M1.6 10.4 L8.6 3.4" stroke="#3a96dd" stroke-width="1.2"/><path d="M6 2.4 H9.8 V6.2" fill="none" stroke="#3a96dd" stroke-width="1.1"/><text x="0.2" y="6.4" font-family="Liberation Sans, sans-serif" font-size="6.6" fill="#e0e0e0" transform="rotate(-45 3 5)">ab</text></svg>
<svg style="left:384.8px;top:76.7px;" width="6.2" height="4.2" viewBox="0 0 6.2 4.2"><path d="M1 1 L3.10 3.20 L5.20 1" fill="none" stroke="#d8d8d8" stroke-width="1.1" stroke-linecap="round" stroke-linejoin="round"/></svg>
<svg style="left:0;top:0" width="1390" height="844" viewBox="0 0 1390 844"><rect x="407.00" y="69.00" width="1.00" height="45.00" fill="#3d3d3d"/></svg>
<svg style="left:416.6px;top:72.2px;" width="12" height="13" viewBox="0 0 12 13"><text x="0.2" y="5.6" font-family="Liberation Sans, sans-serif" font-size="7" fill="#e6e6e6">ab</text><text x="0.4" y="11.6" font-family="Liberation Sans, sans-serif" font-size="7" fill="#e6e6e6">c</text><path d="M8.6 3.2 Q10.6 3.6 10.6 6.4 Q10.6 10 7 10 H5.6 M7.2 8 L5.2 10 L7.2 12" fill="none" stroke="#3a96dd" stroke-width="1.1"/></svg>
<svg style="left:312.9px;top:95.5px;" width="10.4" height="10.049999999999999" viewBox="0 0 10.4 10.049999999999999"><rect x="0.0" y="0.00" width="10.4" height="1.15" fill="#dcdcdc"/><rect x="0.0" y="2.90" width="6.6" height="1.15" fill="#dcdcdc"/><rect x="0.0" y="5.80" width="10.4" height="1.15" fill="#dcdcdc"/><rect x="0.0" y="8.70" width="6.6" height="1.15" fill="#dcdcdc"/></svg>
<svg style="left:331.7px;top:95.5px;" width="10.4" height="10.049999999999999" viewBox="0 0 10.4 10.049999999999999"><rect x="0.0" y="0.00" width="10.4" height="1.15" fill="#dcdcdc"/><rect x="1.9" y="2.90" width="6.6" height="1.15" fill="#dcdcdc"/><rect x="0.0" y="5.80" width="10.4" height="1.15" fill="#dcdcdc"/><rect x="1.9" y="8.70" width="6.6" height="1.15" fill="#dcdcdc"/></svg>
<svg style="left:350.0px;top:95.5px;" width="10.4" height="10.049999999999999" viewBox="0 0 10.4 10.049999999999999"><rect x="0.0" y="0.00" width="10.4" height="1.15" fill="#dcdcdc"/><rect x="3.8" y="2.90" width="6.6" height="1.15" fill="#dcdcdc"/><rect x="0.0" y="5.80" width="10.4" height="1.15" fill="#dcdcdc"/><rect x="3.8" y="8.70" width="6.6" height="1.15" fill="#dcdcdc"/></svg>
<svg style="left:0;top:0" width="1390" height="844" viewBox="0 0 1390 844"><rect x="365.00" y="93.50" width="1.00" height="16.50" fill="#3d3d3d"/></svg>
<svg style="left:370.2px;top:96.6px;" width="11" height="9" viewBox="0 0 11 9"><rect x="0" y="0" width="11" height="1" fill="#dcdcdc"/><rect x="5.4" y="2.6" width="5.6" height="1" fill="#dcdcdc"/><rect x="5.4" y="5.2" width="5.6" height="1" fill="#dcdcdc"/><rect x="0" y="7.8" width="11" height="1" fill="#dcdcdc"/><path d="M4.4 4.4 H0.8 M2.2 2.8 L0.6 4.4 L2.2 6" fill="none" stroke="#3a96dd" stroke-width="1"/></svg>
<svg style="left:389.0px;top:96.6px;" width="11" height="9" viewBox="0 0 11 9"><rect x="0" y="0" width="11" height="1" fill="#dcdcdc"/><rect x="5.4" y="2.6" width="5.6" height="1" fill="#dcdcdc"/><rect x="5.4" y="5.2" width="5.6" height="1" fill="#dcdcdc"/><rect x="0" y="7.8" width="11" height="1" fill="#dcdcdc"/><path d="M0.4 4.4 H4 M2.6 2.8 L4.2 4.4 L2.6 6" fill="none" stroke="#3a96dd" stroke-width="1"/></svg>
<svg style="left:414.8px;top:95.6px;" width="12" height="12" viewBox="0 0 12 12"><rect x="0.6" y="0.6" width="10.8" height="10.8" rx="0.8" fill="none" stroke="#cfcfcf" stroke-width="1"/><path d="M4.2 0.6 V3.6 M7.8 0.6 V3.6 M4.2 8.4 V11.4 M7.8 8.4 V11.4" stroke="#cfcfcf" stroke-width="0.9"/><rect x="1.1" y="3.6" width="9.8" height="4.8" fill="#1e88e5"/><path d="M2.6 6 H9.4 M4 4.8 L2.6 6 L4 7.2 M8 4.8 L9.4 6 L8 7.2" fill="none" stroke="#10263a" stroke-width="0.9"/></svg>
<svg style="left:501.9px;top:99.7px;" width="6.2" height="4.2" viewBox="0 0 6.2 4.2"><path d="M1 1 L3.10 3.20 L5.20 1" fill="none" stroke="#d8d8d8" stroke-width="1.1" stroke-linecap="round" stroke-linejoin="round"/></svg>
<svg style="left:509.8px;top:122.8px;" width="7" height="7" viewBox="0 0 7 7"><path d="M0.6 4 V0.6 H4" fill="none" stroke="#c8c8c8" stroke-width="1"/><path d="M2.2 2.2 L6 6 M6 3.2 V6 H3.2" fill="none" stroke="#c8c8c8" stroke-width="1"/></svg>
<svg style="left:0;top:0" width="1390" height="844" viewBox="0 0 1390 844"><rect x="518.60" y="65.00" width="1.00" height="63.50" fill="#3d3d3d"/></svg>
<div style="left:525.4px;top:70.6px;width:104.0px;height:16.6px;background:#292929;border:1px solid #505050;border-radius:3px;box-sizing:border-box"></div>
<svg style="left:621.8px;top:76.9px;" width="6.2" height="4.2" viewBox="0 0 6.2 4.2"><path d="M1 1 L3.10 3.20 L5.20 1" fill="none" stroke="#d8d8d8" stroke-width="1.1" stroke-linecap="round" stroke-linejoin="round"/></svg>
<svg style="left:543.9px;top:99.7px;" width="6.2" height="4.2" viewBox="0 0 6.2 4.2"><path d="M1 1 L3.10 3.20 L5.20 1" fill="none" stroke="#d8d8d8" stroke-width="1.1" stroke-linecap="round" stroke-linejoin="round"/></svg>
<svg style="left:0;top:0" width="1390" height="844" viewBox="0 0 1390 844"><rect x="591.10" y="94.00" width="1.00" height="15.00" fill="#3d3d3d"/></svg>
<svg style="left:596.4px;top:95.6px;" width="12" height="12" viewBox="0 0 12 12"><path d="M4.6 2.6 H0.8 M2.2 1.2 L0.8 2.6 L2.2 4" fill="none" stroke="#3a96dd" stroke-width="0.9"/><text x="5.2" y="5" font-family="Liberation Sans, sans-serif" font-size="6.6" fill="#e0e0e0">0</text><text x="1" y="11" font-family="Liberation Sans, sans-serif" font-size="6.6" fill="#e0e0e0">.00</text></svg>
<svg style="left:615.0px;top:95.6px;" width="13" height="12" viewBox="0 0 13 12"><text x="3" y="5" font-family="Liberation Sans, sans-serif" font-size="6.6" fill="#e0e0e0">.00</text><path d="M0.6 8.8 H4.4 M3 7.4 L4.4 8.8 L3 10.2" fill="none" stroke="#3a96dd" stroke-width="0.9"/><text x="6" y="11" font-family="Liberation Sans, sans-serif" font-size="6.6" fill="#e0e0e0">.0</text></svg>
<svg style="left:625.4px;top:122.8px;" width="7" height="7" viewBox="0 0 7 7"><path d="M0.6 4 V0.6 H4" fill="none" stroke="#c8c8c8" stroke-width="1"/><path d="M2.2 2.2 L6 6 M6 3.2 V6 H3.2" fill="none" stroke="#c8c8c8" stroke-width="1"/></svg>
<svg style="left:0;top:0" width="1390" height="844" viewBox="0 0 1390 844"><rect x="634.30" y="65.00" width="1.00" height="63.50" fill="#3d3d3d"/></svg>
<svg style="left:644.0px;top:69.0px;" width="24" height="17" viewBox="0 0 24 17"><g fill="none" stroke="#c4c4c4" stroke-width="1"><rect x="1.7" y="0.5" width="20.4" height="16" rx="1.2"/><path d="M1.7 5.7 H22.1 M1.7 11.2 H22.1 M8.5 0.5 V16.5 M15.3 0.5 V16.5"/></g><rect x="4.6" y="5.7" width="18.8" height="5.5" fill="#1e88e5"/><path d="M8.5 6 V11 M15.3 6 V11" stroke="#6db6f2" stroke-width="0.7"/><path d="M5.6 3.4 L0.6 8.45 L5.6 13.5" fill="none" stroke="#3a9bea" stroke-width="1.2" stroke-linejoin="round"/></svg>
<svg style="left:652.1px;top:106.5px;" width="6.2" height="4.2" viewBox="0 0 6.2 4.2"><path d="M1 1 L3.10 3.20 L5.20 1" fill="none" stroke="#d8d8d8" stroke-width="1.1" stroke-linecap="round" stroke-linejoin="round"/></svg>
<svg style="left:675.5px;top:69.0px;" width="24" height="17" viewBox="0 0 24 17"><g fill="none" stroke="#c4c4c4" stroke-width="1"><path d="M15 0.5 H2.2 Q1 0.5 1 1.7 V15.3 Q1 16.5 2.2 16.5 H20.7 Q21.9 16.5 21.9 15.3 V12.6 M21.9 4.4 V1.7 Q21.9 0.5 20.7 0.5 H15"/><path d="M1 5.7 H14 M1 11.2 H14 M7.9 0.5 V16.5 M14.9 0.5 V5 M14.9 12 V16.5"/></g><rect x="4.6" y="5.7" width="10.8" height="5.5" fill="#1e88e5"/><path d="M7.9 6 V11" stroke="#6db6f2" stroke-width="0.7"/><path d="M14.2 4.6 L22.6 12.6 M22.6 4.6 L14.2 12.6" stroke="#e2474f" stroke-width="1.4"/></svg>
<svg style="left:683.7px;top:106.5px;" width="6.2" height="4.2" viewBox="0 0 6.2 4.2"><path d="M1 1 L3.10 3.20 L5.20 1" fill="none" stroke="#d8d8d8" stroke-width="1.1" stroke-linecap="round" stroke-linejoin="round"/></svg>
<svg style="left:707.0px;top:64.6px;" width="23" height="22" viewBox="0 0 23 22"><path d="M5.6 2.6 H17.2" stroke="#3a9bea" stroke-width="1.1"/><path d="M7.4 0.8 L5.4 2.6 L7.4 4.4 M15.4 0.8 L17.4 2.6 L15.4 4.4" fill="none" stroke="#3a9bea" stroke-width="1"/><g fill="none" stroke="#c4c4c4" stroke-width="1"><rect x="1.1" y="4.9" width="20.9" height="16.4" rx="1.2"/><path d="M1.1 10.2 H22 M1.1 15.7 H22 M6.2 4.9 V21.3 M16.7 4.9 V21.3"/></g><rect x="6.2" y="10.2" width="10.5" height="5.5" fill="#1e88e5"/></svg>
<svg style="left:714.8px;top:105.5px;" width="6.2" height="4.2" viewBox="0 0 6.2 4.2"><path d="M1 1 L3.10 3.20 L5.20 1" fill="none" stroke="#d8d8d8" stroke-width="1.1" stroke-linecap="round" stroke-linejoin="round"/></svg>
<svg style="left:0;top:0" width="1390" height="844" viewBox="0 0 1390 844"><rect x="739.50" y="65.00" width="1.00" height="63.50" fill="#3d3d3d"/></svg>
<svg style="left:749.6px;top:67.6px;" width="10" height="11.4" viewBox="0 0 10 11.4"><path d="M8.6 2.6 V0.8 H1 L5 5.6 L1 10.4 H8.6 V8.6" fill="none" stroke="#e2e2e2" stroke-width="1" stroke-linejoin="miter"/></svg>
<svg style="left:810.7px;top:71.3px;" width="6.2" height="4.2" viewBox="0 0 6.2 4.2"><path d="M1 1 L3.10 3.20 L5.20 1" fill="none" stroke="#d8d8d8" stroke-width="1.1" stroke-linecap="round" stroke-linejoin="round"/></svg>
<svg style="left:748.8px;top:86.2px;" width="11.4" height="10.6" viewBox="0 0 11.4 10.6"><rect x="0.6" y="0.6" width="10.2" height="9.4" fill="none" stroke="#cfcfcf" stroke-width="1"/><rect x="0.6" y="0.6" width="10.2" height="2" fill="#cfcfcf"/><path d="M5.7 3.6 V8 M3.8 6.2 L5.7 8.2 L7.6 6.2" fill="none" stroke="#3a96dd" stroke-width="1.1"/></svg>
<svg style="left:774.9px;top:89.7px;" width="6.2" height="4.2" viewBox="0 0 6.2 4.2"><path d="M1 1 L3.10 3.20 L5.20 1" fill="none" stroke="#d8d8d8" stroke-width="1.1" stroke-linecap="round" stroke-linejoin="round"/></svg>
<svg style="left:748.6px;top:104.4px;" width="12" height="11.4" viewBox="0 0 12 11.4"><path d="M6.8 0.8 L11.2 5.2 L6 10.6 H3.2 L0.9 8.2 Z" fill="none" stroke="#c76ad4" stroke-width="1" stroke-linejoin="round"/><path d="M3.3 5.6 L7.3 9.5 L6 10.6 H3.2 L0.9 8.2 Z" fill="#c76ad4"/></svg>
<svg style="left:783.5px;top:108.7px;" width="6.2" height="4.2" viewBox="0 0 6.2 4.2"><path d="M1 1 L3.10 3.20 L5.20 1" fill="none" stroke="#d8d8d8" stroke-width="1.1" stroke-linecap="round" stroke-linejoin="round"/></svg>
<svg style="left:827.6px;top:66.8px;" width="22" height="21" viewBox="0 0 22 21"><text x="0.4" y="9.4" font-family="Liberation Sans, sans-serif" font-size="11.6" fill="#3a96dd">A</text><text x="1" y="20.4" font-family="Liberation Sans, sans-serif" font-size="11.6" fill="#e4e4e4">Z</text><path d="M10.4 6.2 H21.2 L17.2 11.4 V16.2 L14.4 14.8 V11.4 Z" fill="none" stroke="#dcdcdc" stroke-width="1" stroke-linejoin="round"/></svg>
<svg style="left:846.7px;top:106.8px;" width="5.8" height="4" viewBox="0 0 5.8 4"><path d="M1 1 L2.90 3.00 L4.80 1" fill="none" stroke="#d8d8d8" stroke-width="1.1" stroke-linecap="round" stroke-linejoin="round"/></svg>
<svg style="left:860.6px;top:66.6px;" width="23" height="22" viewBox="0 0 23 22"><circle cx="14.4" cy="8" r="6.8" fill="none" stroke="#dcdcdc" stroke-width="1.1"/><path d="M9.6 12.8 L1.2 21" stroke="#dcdcdc" stroke-width="1.2" stroke-linecap="round"/></svg>
<svg style="left:882.3px;top:106.8px;" width="5.8" height="4" viewBox="0 0 5.8 4"><path d="M1 1 L2.90 3.00 L4.80 1" fill="none" stroke="#d8d8d8" stroke-width="1.1" stroke-linecap="round" stroke-linejoin="round"/></svg>
<svg style="left:0;top:0" width="1390" height="844" viewBox="0 0 1390 844"><rect x="894.40" y="65.00" width="1.00" height="63.50" fill="#3d3d3d"/></svg>
<svg style="left:906.8px;top:67.0px;" width="22" height="21" viewBox="0 0 22 21"><g fill="none" stroke="#b9441f" stroke-width="1.25"><rect x="0.8" y="0.8" width="20.4" height="19.4" rx="1"/><rect x="3.8" y="3.6" width="5.8" height="5.6"/><rect x="12.4" y="3.6" width="5.8" height="5.6"/><rect x="3.8" y="11.8" width="5.8" height="5.6"/><rect x="12.4" y="11.8" width="5.8" height="5.6"/></g></svg>
<svg style="left:0;top:0" width="1390" height="844" viewBox="0 0 1390 844"><rect x="939.70" y="65.00" width="1.00" height="63.50" fill="#3d3d3d"/></svg>
<svg style="left:952.4px;top:67.2px;" width="21.4" height="20.6" viewBox="0 0 21.4 20.6"><g fill="none" stroke="#b4b4b4" stroke-width="1"><rect x="0.6" y="0.6" width="20" height="19.2"/><path d="M0.6 4.6 H20.6 M0.6 14.6 H6 M14.8 14.6 H20.6 M5.2 0.6 V6 M15.6 0.6 V5.6 M5.2 14 V19.8 M10.6 15.6 V19.8"/></g><circle cx="10.6" cy="10" r="5.6" fill="#282828" stroke="#dedede" stroke-width="1.1"/><path d="M14.6 14 L20.6 20" stroke="#dedede" stroke-width="1.4"/><rect x="7.8" y="9.6" width="1.6" height="3" fill="#9a9a9a"/><rect x="9.9" y="7" width="1.8" height="5.6" fill="#1e88e5"/><rect x="12.1" y="8.6" width="1.6" height="4" fill="#9a9a9a"/></svg>
<svg style="left:0;top:0" width="1390" height="844" viewBox="0 0 1390 844"><rect x="984.90" y="65.00" width="1.00" height="63.50" fill="#3d3d3d"/></svg>
<svg style="left:1032.0px;top:68.0px;" width="56" height="56" viewBox="0 0 56 56"><circle cx="27.6" cy="27.4" r="27.1" fill="#fff"/><rect x="13.6" y="14.8" width="28.8" height="25" fill="#5b5fe9"/><rect x="17.6" y="18.6" width="8.8" height="6.2" fill="#fff"/><rect x="29.6" y="18.6" width="8.8" height="6.2" fill="#fff"/><rect x="17.6" y="28" width="8.8" height="7.6" fill="#fff"/><rect x="29.6" y="28" width="8.8" height="7.6" fill="#fff"/></svg>
<svg style="left:1154.0px;top:72.0px;" width="25" height="25" viewBox="0 0 25 25"><circle cx="12.4" cy="14" r="6.9" fill="none" stroke="#fff" stroke-width="4.6"/><rect x="9.6" y="0.6" width="5.6" height="13.4" fill="#282828"/><rect x="10.5" y="1" width="3.8" height="12.6" rx="1" fill="#fff"/></svg>
<svg style="left:1364.8px;top:120.8px;" width="8" height="5.2" viewBox="0 0 8 5.2"><path d="M1 1 L4.00 4.20 L7.00 1" fill="none" stroke="#e0e0e0" stroke-width="1.2" stroke-linecap="round" stroke-linejoin="round"/></svg>
<svg style="left:1373.5px;top:137.0px;" width="8" height="6" viewBox="0 0 8 6"><path d="M4 0.8 L7.4 5.2 H0.6 Z" fill="#9a9a9a"/></svg>
<svg style="left:0;top:0" width="1390" height="844" viewBox="0 0 1390 844"><rect x="1370.50" y="144.00" width="14.50" height="656.00" fill="#121212"/><rect x="1374.60" y="145.60" width="5.70" height="587.00" rx="2.9" fill="#9d9d9d"/></svg>
<svg style="left:1373.6px;top:791.8px;" width="8" height="6" viewBox="0 0 8 6"><path d="M4 5.2 L7.4 0.8 H0.6 Z" fill="#9a9a9a"/></svg>
<svg style="left:19.6px;top:806.0px;" width="10" height="12" viewBox="0 0 10 12"><path d="M6.4 1.4 L2.8 5.3 L6.4 9.2" fill="none" stroke="#d4d4d4" stroke-width="1.05"/></svg>
<svg style="left:42.4px;top:806.0px;" width="10" height="12" viewBox="0 0 10 12"><path d="M3.2 1.4 L6.8 5.3 L3.2 9.2" fill="none" stroke="#d4d4d4" stroke-width="1.05"/></svg>
<svg style="left:0;top:0" width="1390" height="844" viewBox="0 0 1390 844"><rect x="85.10" y="803.20" width="50.40" height="16.80" rx="3" fill="#f5eb5b"/><rect x="138.20" y="804.50" width="1.00" height="14.50" fill="#333"/><rect x="141.80" y="803.20" width="75.30" height="16.80" rx="3" fill="#f5eb5b"/><rect x="219.80" y="804.50" width="1.00" height="14.50" fill="#333"/><rect x="223.60" y="803.20" width="42.60" height="16.80" rx="3" fill="#f5eb5b"/><rect x="268.90" y="804.50" width="1.00" height="14.50" fill="#333"/><rect x="272.70" y="803.20" width="41.30" height="16.80" rx="3" fill="#f5eb5b"/><rect x="316.70" y="804.50" width="1.00" height="14.50" fill="#333"/><rect x="320.20" y="803.20" width="54.60" height="16.80" rx="3" fill="#f5eb5b"/><rect x="377.50" y="804.50" width="1.00" height="14.50" fill="#333"/><rect x="381.10" y="803.20" width="42.80" height="16.80" rx="3" fill="#f5eb5b"/><rect x="426.60" y="804.50" width="1.00" height="14.50" fill="#333"/><rect x="430.40" y="803.20" width="19.90" height="16.80" rx="3" fill="#4ab3e8"/><rect x="453.00" y="804.50" width="1.00" height="14.50" fill="#333"/><rect x="456.60" y="803.20" width="22.70" height="16.80" rx="3" fill="#4ab3e8"/><rect x="482.00" y="804.50" width="1.00" height="14.50" fill="#333"/><rect x="485.80" y="803.20" width="23.00" height="16.80" rx="3" fill="#4ab3e8"/><rect x="511.50" y="804.50" width="1.00" height="14.50" fill="#333"/><rect x="515.10" y="803.20" width="54.90" height="16.80" rx="3" fill="#4ab3e8"/><rect x="572.70" y="804.50" width="1.00" height="14.50" fill="#333"/><rect x="576.30" y="803.20" width="54.80" height="16.80" rx="3" fill="#4ab3e8"/><rect x="633.80" y="804.50" width="1.00" height="14.50" fill="#333"/><rect x="637.50" y="803.20" width="54.80" height="16.80" rx="3" fill="#4ab3e8"/><rect x="695.00" y="804.50" width="1.00" height="14.50" fill="#333"/><rect x="698.60" y="803.20" width="22.60" height="16.80" rx="3" fill="#4ab3e8"/><rect x="723.90" y="804.50" width="1.00" height="14.50" fill="#333"/><rect x="727.50" y="803.20" width="34.30" height="16.80" rx="3" fill="#4ab3e8"/><rect x="764.50" y="804.50" width="1.00" height="14.50" fill="#333"/><rect x="768.30" y="803.20" width="40.60" height="16.80" rx="3" fill="#4ab3e8"/><rect x="811.60" y="804.50" width="1.00" height="14.50" fill="#333"/><rect x="815.20" y="803.20" width="30.40" height="16.80" rx="3" fill="#4ab3e8"/><rect x="848.30" y="804.50" width="1.00" height="14.50" fill="#333"/><rect x="851.90" y="803.20" width="81.60" height="16.80" rx="3" fill="#4ab3e8"/></svg>
<div style="left:939.4px;top:800.0px;width:39.8px;height:20.0px;background:linear-gradient(#ffffff 15%,#cfe9f8);border-radius:0 0 4px 4px"></div>
<svg style="left:0;top:0" width="1390" height="844" viewBox="0 0 1390 844"><rect x="945.20" y="816.50" width="28.60" height="1.40" fill="#1f8a4c"/></svg>
<div style="left:985.4px;top:803.2px;width:7.2px;height:16.8px;background:#4ab3e8;border-radius:3px 0 0 3px"></div>
<svg style="left:1021.4px;top:806.1px;" width="10" height="10" viewBox="0 0 10 10"><path d="M5 1.1 V8.9 M1.1 5 H8.9" stroke="#e6e6e6" stroke-width="0.9"/></svg>
<svg style="left:1048.0px;top:806.0px;" width="4" height="10" viewBox="0 0 4 10"><circle cx="2" cy="1.6" r="0.9" fill="#dcdcdc"/><circle cx="2" cy="5" r="0.9" fill="#dcdcdc"/><circle cx="2" cy="8.4" r="0.9" fill="#dcdcdc"/></svg>
<svg style="left:1064.2px;top:807.0px;" width="7" height="8" viewBox="0 0 7 8"><path d="M6.2 0.4 V7.6 L0.8 4 Z" fill="#a6a6a6"/></svg>
<svg style="left:0;top:0" width="1390" height="844" viewBox="0 0 1390 844"><rect x="1073.80" y="807.80" width="273.40" height="6.40" rx="3.2" fill="#a3a3a3"/></svg>
<svg style="left:1360.2px;top:807.0px;" width="7" height="8" viewBox="0 0 7 8"><path d="M0.8 0.4 V7.6 L6.2 4 Z" fill="#a6a6a6"/></svg>
<svg style="left:47.4px;top:826.2px;" width="12" height="10.6" viewBox="0 0 12 10.6"><rect x="0.7" y="0.7" width="9.8" height="8.8" rx="0.8" fill="none" stroke="#d2d2d2" stroke-width="1.1"/><path d="M0.7 3 H10.5 M3.4 0.7 V3" stroke="#d2d2d2" stroke-width="0.9"/><circle cx="7.8" cy="6.9" r="2.7" fill="#1b1b1b" stroke="#d2d2d2" stroke-width="1"/><circle cx="7.8" cy="6.9" r="1.1" fill="#d2d2d2"/></svg>
<svg style="left:69.6px;top:825.2px;" width="11.4" height="12" viewBox="0 0 11.4 12"><circle cx="5" cy="1.9" r="1.4" fill="none" stroke="#dadada" stroke-width="1"/><path d="M1 4.6 Q5 3.2 9 4.6 M3.4 4.4 V7.2 L2 10.8 M6.6 4.4 V7 L7.4 8.4" fill="none" stroke="#dadada" stroke-width="1.05" stroke-linecap="round"/><path d="M7.2 8.8 L10.2 11.4 M10.2 8.8 L7.2 11.4" stroke="#dadada" stroke-width="1" stroke-linecap="round"/></svg>
<svg style="left:0;top:0" width="1390" height="844" viewBox="0 0 1390 844"><rect x="1171.80" y="823.20" width="26.60" height="15.60" fill="#2c2c2c"/></svg>
<svg style="left:1179.6px;top:825.6px;" width="11" height="10.4" viewBox="0 0 11 10.4"><rect x="0.6" y="0.6" width="9.8" height="9.2" fill="none" stroke="#e2e2e2" stroke-width="1"/><path d="M0.6 3.6 H10.4 M0.6 6.7 H10.4 M3.8 0.6 V9.8 M7.1 0.6 V9.8" stroke="#e2e2e2" stroke-width="0.9"/></svg>
<svg style="left:1208.6px;top:825.6px;" width="11" height="10.4" viewBox="0 0 11 10.4"><rect x="0.6" y="0.6" width="9.8" height="9.2" fill="none" stroke="#cfcfcf" stroke-width="1"/><path d="M2.9 0.6 V9.8 M8.1 0.6 V9.8" stroke="#cfcfcf" stroke-width="0.8"/><rect x="4.4" y="2.6" width="2.2" height="5.2" fill="none" stroke="#cfcfcf" stroke-width="0.8"/></svg>
<svg style="left:1237.0px;top:825.6px;" width="11" height="10.4" viewBox="0 0 11 10.4"><rect x="0.6" y="0.6" width="9.8" height="9.2" fill="none" stroke="#cfcfcf" stroke-width="1"/><path d="M3.6 0.6 V5.4 H7.4 V0.6 M0.6 5.4 H10.4" fill="none" stroke="#cfcfcf" stroke-width="0.9"/></svg>
<svg style="left:0;top:0" width="1390" height="844" viewBox="0 0 1390 844"><rect x="1261.00" y="830.60" width="5.20" height="1.00" fill="#a6a6a6"/><rect x="1270.60" y="830.60" width="71.40" height="1.00" fill="#8e8e8e"/><rect x="1306.40" y="826.60" width="3.60" height="8.60" rx="1" fill="#aeaeae"/></svg>
<svg style="left:1345.0px;top:827.6px;" width="7" height="7" viewBox="0 0 7 7"><path d="M3.5 0.9 V6.1 M0.9 3.5 H6.1" stroke="#a6a6a6" stroke-width="0.9"/></svg>
<span class="t" style="font-family:'DejaVu Sans Condensed', 'DejaVu Sans', 'Liberation Sans', sans-serif;font-size:8.9px;color:#e4e4e4;left:-271.90px;width:600px;text-align:center;top:130.00px;">A</span>
<span class="t" style="font-family:'DejaVu Sans Condensed', 'DejaVu Sans', 'Liberation Sans', sans-serif;font-size:8.9px;color:#e4e4e4;left:-258.45px;width:600px;text-align:center;top:130.00px;">B</span>
<span class="t" style="font-family:'DejaVu Sans Condensed', 'DejaVu Sans', 'Liberation Sans', sans-serif;font-size:8.9px;color:#e4e4e4;left:-246.70px;width:600px;text-align:center;top:130.00px;">C</span>
<span class="t" style="font-family:'DejaVu Sans Condensed', 'DejaVu Sans', 'Liberation Sans', sans-serif;font-size:8.9px;color:#e4e4e4;left:-217.25px;width:600px;text-align:center;top:130.00px;">D</span>
<span class="t" style="font-family:'DejaVu Sans Condensed', 'DejaVu Sans', 'Liberation Sans', sans-serif;font-size:8.9px;color:#e4e4e4;left:-156.60px;width:600px;text-align:center;top:130.00px;">E</span>
<span class="t" style="font-family:'DejaVu Sans Condensed', 'DejaVu Sans', 'Liberation Sans', sans-serif;font-size:8.9px;color:#e4e4e4;left:-86.95px;width:600px;text-align:center;top:130.00px;">F</span>
<span class="t" style="font-family:'DejaVu Sans Condensed', 'DejaVu Sans', 'Liberation Sans', sans-serif;font-size:8.9px;color:#e4e4e4;left:-14.00px;width:600px;text-align:center;top:130.00px;">G</span>
<span class="t" style="font-family:'DejaVu Sans Condensed', 'DejaVu Sans', 'Liberation Sans', sans-serif;font-size:8.9px;color:#e4e4e4;left:251.95px;width:600px;text-align:center;top:130.00px;">H</span>
<span class="t" style="font-family:'DejaVu Sans Condensed', 'DejaVu Sans', 'Liberation Sans', sans-serif;font-size:8.9px;color:#e4e4e4;left:521.25px;width:600px;text-align:center;top:130.00px;">I</span>
<span class="t" style="font-family:'DejaVu Sans Condensed', 'DejaVu Sans', 'Liberation Sans', sans-serif;font-size:8.9px;color:#e4e4e4;left:604.65px;width:600px;text-align:center;top:130.00px;">J</span>
<span class="t" style="font-family:'DejaVu Sans Condensed', 'DejaVu Sans', 'Liberation Sans', sans-serif;font-size:8.9px;color:#e4e4e4;left:687.95px;width:600px;text-align:center;top:130.00px;">K</span>
<span class="t" style="font-family:'DejaVu Sans Condensed', 'DejaVu Sans', 'Liberation Sans', sans-serif;font-size:8.9px;color:#e4e4e4;left:771.30px;width:600px;text-align:center;top:130.00px;">L</span>
<span class="t" style="font-family:'DejaVu Sans Condensed', 'DejaVu Sans', 'Liberation Sans', sans-serif;font-size:8.9px;color:#e4e4e4;left:857.00px;width:600px;text-align:center;top:130.00px;">M</span>
<span class="t" style="font-family:'DejaVu Sans Condensed', 'DejaVu Sans', 'Liberation Sans', sans-serif;font-size:8.9px;color:#e4e4e4;left:904.75px;width:600px;text-align:center;top:130.00px;">N</span>
<span class="t" style="font-family:'DejaVu Sans Condensed', 'DejaVu Sans', 'Liberation Sans', sans-serif;font-size:8.9px;color:#e4e4e4;left:982.60px;width:600px;text-align:center;top:130.00px;">O</span>
<span class="t" style="font-family:'DejaVu Sans Condensed', 'DejaVu Sans', 'Liberation Sans', sans-serif;font-size:9.0px;color:#e4e4e4;left:-286.20px;width:600px;text-align:center;top:148.00px;">1</span>
<span class="t" style="font-family:'DejaVu Sans Condensed', 'DejaVu Sans', 'Liberation Sans', sans-serif;font-size:9.0px;color:#e4e4e4;left:-286.20px;width:600px;text-align:center;top:164.00px;">2</span>
<span class="t" style="font-family:'DejaVu Sans Condensed', 'DejaVu Sans', 'Liberation Sans', sans-serif;font-size:9.0px;color:#e4e4e4;left:-286.20px;width:600px;text-align:center;top:180.00px;">3</span>
<span class="t" style="font-family:'DejaVu Sans Condensed', 'DejaVu Sans', 'Liberation Sans', sans-serif;font-size:9.0px;color:#e4e4e4;left:-286.20px;width:600px;text-align:center;top:192.00px;">4</span>
<span class="t" style="font-family:'DejaVu Sans Condensed', 'DejaVu Sans', 'Liberation Sans', sans-serif;font-size:9.0px;color:#e4e4e4;left:-286.20px;width:600px;text-align:center;top:205.00px;">6</span>
<span class="t" style="font-family:'DejaVu Sans Condensed', 'DejaVu Sans', 'Liberation Sans', sans-serif;font-size:9.0px;color:#e4e4e4;left:-286.20px;width:600px;text-align:center;top:216.00px;">8</span>
<span class="t" style="font-family:'DejaVu Sans Condensed', 'DejaVu Sans', 'Liberation Sans', sans-serif;font-size:9.0px;color:#e4e4e4;left:-286.20px;width:600px;text-align:center;top:233.00px;">9</span>
<span class="t" style="font-family:'DejaVu Sans Condensed', 'DejaVu Sans', 'Liberation Sans', sans-serif;font-size:9.0px;color:#e4e4e4;left:-286.20px;width:600px;text-align:center;top:245.00px;">10</span>
<span class="t" style="font-family:'DejaVu Sans Condensed', 'DejaVu Sans', 'Liberation Sans', sans-serif;font-size:9.0px;color:#e4e4e4;left:-286.20px;width:600px;text-align:center;top:259.00px;">11</span>
<span class="t" style="font-family:'DejaVu Sans Condensed', 'DejaVu Sans', 'Liberation Sans', sans-serif;font-size:9.0px;color:#e4e4e4;left:-286.20px;width:600px;text-align:center;top:274.00px;">12</span>
<span class="t" style="font-family:'DejaVu Sans Condensed', 'DejaVu Sans', 'Liberation Sans', sans-serif;font-size:9.0px;color:#e4e4e4;left:-286.20px;width:600px;text-align:center;top:288.00px;">13</span>
<span class="t" style="font-family:'DejaVu Sans Condensed', 'DejaVu Sans', 'Liberation Sans', sans-serif;font-size:9.0px;color:#e4e4e4;left:-286.20px;width:600px;text-align:center;top:303.00px;">14</span>
<span class="t" style="font-family:'DejaVu Sans Condensed', 'DejaVu Sans', 'Liberation Sans', sans-serif;font-size:9.0px;color:#e4e4e4;left:-286.20px;width:600px;text-align:center;top:313.00px;">15</span>
<span class="t" style="font-family:'DejaVu Sans Condensed', 'DejaVu Sans', 'Liberation Sans', sans-serif;font-size:9.0px;color:#e4e4e4;left:-286.20px;width:600px;text-align:center;top:330.00px;">16</span>
<span class="t" style="font-family:'DejaVu Sans Condensed', 'DejaVu Sans', 'Liberation Sans', sans-serif;font-size:9.0px;color:#e4e4e4;left:-286.20px;width:600px;text-align:center;top:342.00px;">17</span>
<span class="t" style="font-family:'DejaVu Sans Condensed', 'DejaVu Sans', 'Liberation Sans', sans-serif;font-size:9.0px;color:#e4e4e4;left:-286.20px;width:600px;text-align:center;top:357.00px;">18</span>
<span class="t" style="font-family:'DejaVu Sans Condensed', 'DejaVu Sans', 'Liberation Sans', sans-serif;font-size:9.0px;color:#e4e4e4;left:-286.20px;width:600px;text-align:center;top:371.00px;">19</span>
<span class="t" style="font-family:'DejaVu Sans Condensed', 'DejaVu Sans', 'Liberation Sans', sans-serif;font-size:9.0px;color:#e4e4e4;left:-286.20px;width:600px;text-align:center;top:386.00px;">20</span>
<span class="t" style="font-family:'DejaVu Sans Condensed', 'DejaVu Sans', 'Liberation Sans', sans-serif;font-size:9.0px;color:#e4e4e4;left:-286.20px;width:600px;text-align:center;top:400.00px;">21</span>
<span class="t" style="font-family:'DejaVu Sans Condensed', 'DejaVu Sans', 'Liberation Sans', sans-serif;font-size:9.0px;color:#e4e4e4;left:-286.20px;width:600px;text-align:center;top:414.00px;">22</span>
<span class="t" style="font-family:'DejaVu Sans Condensed', 'DejaVu Sans', 'Liberation Sans', sans-serif;font-size:9.0px;color:#e4e4e4;left:-286.20px;width:600px;text-align:center;top:425.00px;">23</span>
<span class="t" style="font-family:'DejaVu Sans Condensed', 'DejaVu Sans', 'Liberation Sans', sans-serif;font-size:9.0px;color:#e4e4e4;left:-286.20px;width:600px;text-align:center;top:442.00px;">24</span>
<span class="t" style="font-family:'DejaVu Sans Condensed', 'DejaVu Sans', 'Liberation Sans', sans-serif;font-size:9.0px;color:#e4e4e4;left:-286.20px;width:600px;text-align:center;top:454.00px;">25</span>
<span class="t" style="font-family:'DejaVu Sans Condensed', 'DejaVu Sans', 'Liberation Sans', sans-serif;font-size:9.0px;color:#e4e4e4;left:-286.20px;width:600px;text-align:center;top:468.00px;">26</span>
<span class="t" style="font-family:'DejaVu Sans Condensed', 'DejaVu Sans', 'Liberation Sans', sans-serif;font-size:9.0px;color:#e4e4e4;left:-286.20px;width:600px;text-align:center;top:483.00px;">27</span>
<span class="t" style="font-family:'DejaVu Sans Condensed', 'DejaVu Sans', 'Liberation Sans', sans-serif;font-size:9.0px;color:#e4e4e4;left:-286.20px;width:600px;text-align:center;top:497.00px;">28</span>
<span class="t" style="font-family:'DejaVu Sans Condensed', 'DejaVu Sans', 'Liberation Sans', sans-serif;font-size:9.0px;color:#e4e4e4;left:-286.20px;width:600px;text-align:center;top:508.00px;">29</span>
<span class="t" style="font-family:'DejaVu Sans Condensed', 'DejaVu Sans', 'Liberation Sans', sans-serif;font-size:9.0px;color:#e4e4e4;left:-286.20px;width:600px;text-align:center;top:525.00px;">30</span>
<span class="t" style="font-family:'DejaVu Sans Condensed', 'DejaVu Sans', 'Liberation Sans', sans-serif;font-size:9.0px;color:#e4e4e4;left:-286.20px;width:600px;text-align:center;top:537.00px;">31</span>
<span class="t" style="font-family:'DejaVu Sans Condensed', 'DejaVu Sans', 'Liberation Sans', sans-serif;font-size:9.0px;color:#e4e4e4;left:-286.20px;width:600px;text-align:center;top:551.00px;">32</span>
<span class="t" style="font-family:'DejaVu Sans Condensed', 'DejaVu Sans', 'Liberation Sans', sans-serif;font-size:9.0px;color:#e4e4e4;left:-286.20px;width:600px;text-align:center;top:566.00px;">33</span>
<span class="t" style="font-family:'DejaVu Sans Condensed', 'DejaVu Sans', 'Liberation Sans', sans-serif;font-size:9.0px;color:#e4e4e4;left:-286.20px;width:600px;text-align:center;top:580.00px;">34</span>
<span class="t" style="font-family:'DejaVu Sans Condensed', 'DejaVu Sans', 'Liberation Sans', sans-serif;font-size:9.0px;color:#e4e4e4;left:-286.20px;width:600px;text-align:center;top:595.00px;">35</span>
<span class="t" style="font-family:'DejaVu Sans Condensed', 'DejaVu Sans', 'Liberation Sans', sans-serif;font-size:9.0px;color:#e4e4e4;left:-286.20px;width:600px;text-align:center;top:609.00px;">36</span>
<span class="t" style="font-family:'DejaVu Sans Condensed', 'DejaVu Sans', 'Liberation Sans', sans-serif;font-size:9.0px;color:#e4e4e4;left:-286.20px;width:600px;text-align:center;top:620.00px;">37</span>
<span class="t" style="font-family:'DejaVu Sans Condensed', 'DejaVu Sans', 'Liberation Sans', sans-serif;font-size:9.0px;color:#e4e4e4;left:-286.20px;width:600px;text-align:center;top:636.00px;">38</span>
<span class="t" style="font-family:'DejaVu Sans Condensed', 'DejaVu Sans', 'Liberation Sans', sans-serif;font-size:9.0px;color:#e4e4e4;left:-286.20px;width:600px;text-align:center;top:649.00px;">39</span>
<span class="t" style="font-family:'DejaVu Sans Condensed', 'DejaVu Sans', 'Liberation Sans', sans-serif;font-size:9.0px;color:#e4e4e4;left:-286.20px;width:600px;text-align:center;top:663.00px;">40</span>
<span class="t" style="font-family:'DejaVu Sans Condensed', 'DejaVu Sans', 'Liberation Sans', sans-serif;font-size:9.0px;color:#e4e4e4;left:-286.20px;width:600px;text-align:center;top:677.00px;">41</span>
<span class="t" style="font-family:'DejaVu Sans Condensed', 'DejaVu Sans', 'Liberation Sans', sans-serif;font-size:9.0px;color:#e4e4e4;left:-286.20px;width:600px;text-align:center;top:692.00px;">42</span>
<span class="t" style="font-family:'DejaVu Sans Condensed', 'DejaVu Sans', 'Liberation Sans', sans-serif;font-size:9.0px;color:#e4e4e4;left:-286.20px;width:600px;text-align:center;top:706.00px;">43</span>
<span class="t" style="font-family:'DejaVu Sans Condensed', 'DejaVu Sans', 'Liberation Sans', sans-serif;font-size:9.0px;color:#e4e4e4;left:-286.20px;width:600px;text-align:center;top:721.00px;">44</span>
<span class="t" style="font-family:'DejaVu Sans Condensed', 'DejaVu Sans', 'Liberation Sans', sans-serif;font-size:9.0px;color:#e4e4e4;left:-286.20px;width:600px;text-align:center;top:735.00px;">45</span>
<span class="t" style="font-family:'DejaVu Sans Condensed', 'DejaVu Sans', 'Liberation Sans', sans-serif;font-size:9.0px;color:#e4e4e4;left:-286.20px;width:600px;text-align:center;top:746.00px;">46</span>
<span class="t" style="font-family:'DejaVu Sans Condensed', 'DejaVu Sans', 'Liberation Sans', sans-serif;font-size:9.0px;color:#e4e4e4;left:-286.20px;width:600px;text-align:center;top:763.00px;">47</span>
<span class="t" style="font-family:'DejaVu Sans Condensed', 'DejaVu Sans', 'Liberation Sans', sans-serif;font-size:9.0px;color:#e4e4e4;left:-286.20px;width:600px;text-align:center;top:775.00px;clip-path:inset(0 0 0.0px 0);">48</span>
<span class="t" style="font-family:'DejaVu Sans Condensed', 'DejaVu Sans', 'Liberation Sans', sans-serif;font-size:9.0px;color:#e4e4e4;left:-286.20px;width:600px;text-align:center;top:789.00px;clip-path:inset(0 0 9.0px 0);">49</span>
<span class="t" style="font-family:'DejaVu Sans Condensed', 'DejaVu Sans', 'Liberation Sans', sans-serif;font-size:15.6px;color:#111;font-weight:700;letter-spacing:0.047px;left:36.60px;top:144.00px;">Financial Ratios</span>
<span class="t" style="font-family:'DejaVu Sans', 'Liberation Sans', sans-serif;font-size:12.2px;color:#111;font-weight:700;letter-spacing:0.012px;left:36.20px;top:161.00px;">ABC Company Inc.</span>
<span class="t" style="font-family:'DejaVu Sans Condensed', 'DejaVu Sans', 'Liberation Sans', sans-serif;font-size:8.9px;color:#1f6bf5;font-weight:700;text-decoration:underline;letter-spacing:0.173px;left:35.10px;top:178.00px;">Go to Table of Contents</span>
<span class="t" style="font-family:'DejaVu Sans Condensed', 'DejaVu Sans', 'Liberation Sans', sans-serif;font-size:9.2px;color:#fff;font-weight:700;letter-spacing:-0.163px;left:39.60px;top:204.00px;">Fiscal year</span>
<span class="t" style="font-family:'DejaVu Sans Condensed', 'DejaVu Sans', 'Liberation Sans', sans-serif;font-size:9.2px;color:#fff;font-weight:700;left:251.95px;width:600px;text-align:center;top:204.00px;">Notes</span>
<span class="t" style="font-family:'DejaVu Sans Condensed', 'DejaVu Sans', 'Liberation Sans', sans-serif;font-size:9.2px;color:#fff;font-weight:700;left:521.25px;width:600px;text-align:center;top:204.00px;">2026</span>
<span class="t" style="font-family:'DejaVu Sans Condensed', 'DejaVu Sans', 'Liberation Sans', sans-serif;font-size:9.2px;color:#fff;font-weight:700;left:604.65px;width:600px;text-align:center;top:204.00px;">2027</span>
<span class="t" style="font-family:'DejaVu Sans Condensed', 'DejaVu Sans', 'Liberation Sans', sans-serif;font-size:9.2px;color:#fff;font-weight:700;left:687.95px;width:600px;text-align:center;top:204.00px;">2028</span>
<span class="t" style="font-family:'DejaVu Sans Condensed', 'DejaVu Sans', 'Liberation Sans', sans-serif;font-size:9.2px;color:#fff;font-weight:700;left:771.30px;width:600px;text-align:center;top:204.00px;">2029</span>
<span class="t" style="font-family:'DejaVu Sans Condensed', 'DejaVu Sans', 'Liberation Sans', sans-serif;font-size:9.2px;color:#fff;font-weight:700;left:857.00px;width:600px;text-align:center;top:204.00px;">2030</span>
<span class="t" style="font-family:'DejaVu Sans Condensed', 'DejaVu Sans', 'Liberation Sans', sans-serif;font-size:9.2px;color:#fff;font-weight:700;left:978.85px;width:600px;text-align:center;top:204.00px;">Trend</span>
<span class="t" style="font-family:'DejaVu Sans', 'Liberation Sans', sans-serif;font-size:12.2px;color:#fff;font-weight:700;letter-spacing:-0.080px;left:395.31px;width:600px;text-align:center;top:230.00px;">Cash Flow Indicator Ratios</span>
<span class="t" style="font-family:'DejaVu Sans', 'Liberation Sans', sans-serif;font-size:12.2px;color:#fff;font-weight:700;letter-spacing:-0.080px;left:395.31px;width:600px;text-align:center;top:327.00px;">Debt Ratios</span>
<span class="t" style="font-family:'DejaVu Sans', 'Liberation Sans', sans-serif;font-size:12.2px;color:#fff;font-weight:700;letter-spacing:-0.080px;left:395.31px;width:600px;text-align:center;top:439.00px;">Liquidity Ratios</span>
<span class="t" style="font-family:'DejaVu Sans', 'Liberation Sans', sans-serif;font-size:12.2px;color:#fff;font-weight:700;letter-spacing:-0.080px;left:395.31px;width:600px;text-align:center;top:522.00px;">Operating Performance Ratios</span>
<span class="t" style="font-family:'DejaVu Sans', 'Liberation Sans', sans-serif;font-size:12.2px;color:#fff;font-weight:700;letter-spacing:-0.080px;left:395.31px;width:600px;text-align:center;top:634.00px;">Profitability Ratios</span>
<span class="t" style="font-family:'DejaVu Sans', 'Liberation Sans', sans-serif;font-size:12.2px;color:#fff;font-weight:700;letter-spacing:-0.080px;left:395.31px;width:600px;text-align:center;top:760.00px;">Return Ratios (as of the year end)</span>
<span class="t" style="font-family:'DejaVu Sans Condensed', 'DejaVu Sans', 'Liberation Sans', sans-serif;font-size:10.5px;color:#161616;letter-spacing:-0.390px;left:57.60px;top:257.00px;word-spacing:1px;-webkit-text-stroke:0.15px #161616;">Operating Cash Flow to Sales</span>
<span class="t" style="font-family:'DejaVu Sans Condensed', 'DejaVu Sans', 'Liberation Sans', sans-serif;font-size:9.3px;color:#161616;font-style:italic;letter-spacing:-0.150px;left:326.00px;top:258.00px;-webkit-text-stroke:0.15px #161616;">Operating Cash Flow / Sales</span>
<span class="t" style="font-family:'DejaVu Sans Condensed', 'DejaVu Sans', 'Liberation Sans', sans-serif;font-size:9.3px;color:#161616;letter-spacing:-0.250px;right:529.05px;top:258.00px;-webkit-text-stroke:0.15px #161616;">(0.54)</span>
<span class="t" style="font-family:'DejaVu Sans Condensed', 'DejaVu Sans', 'Liberation Sans', sans-serif;font-size:9.3px;color:#161616;letter-spacing:-0.250px;right:448.95px;top:258.00px;-webkit-text-stroke:0.15px #161616;">0.06</span>
<span class="t" style="font-family:'DejaVu Sans Condensed', 'DejaVu Sans', 'Liberation Sans', sans-serif;font-size:9.3px;color:#161616;letter-spacing:-0.250px;right:365.65px;top:258.00px;-webkit-text-stroke:0.15px #161616;">0.33</span>
<span class="t" style="font-family:'DejaVu Sans Condensed', 'DejaVu Sans', 'Liberation Sans', sans-serif;font-size:9.3px;color:#161616;letter-spacing:-0.250px;right:282.25px;top:258.00px;-webkit-text-stroke:0.15px #161616;">0.47</span>
<span class="t" style="font-family:'DejaVu Sans Condensed', 'DejaVu Sans', 'Liberation Sans', sans-serif;font-size:9.3px;color:#161616;letter-spacing:-0.250px;right:194.25px;top:258.00px;-webkit-text-stroke:0.15px #161616;">0.54</span>
<span class="t" style="font-family:'DejaVu Sans Condensed', 'DejaVu Sans', 'Liberation Sans', sans-serif;font-size:10.5px;color:#161616;letter-spacing:-0.390px;left:57.60px;top:272.00px;word-spacing:1px;-webkit-text-stroke:0.15px #161616;">DSCR (debt service coverage ratio)</span>
<span class="t" style="font-family:'DejaVu Sans Condensed', 'DejaVu Sans', 'Liberation Sans', sans-serif;font-size:9.3px;color:#161616;font-style:italic;letter-spacing:-0.150px;left:326.00px;top:272.00px;-webkit-text-stroke:0.15px #161616;">Net Operating Income / (Interest + Principal)</span>
<span class="t" style="font-family:'DejaVu Sans Condensed', 'DejaVu Sans', 'Liberation Sans', sans-serif;font-size:9.3px;color:#161616;letter-spacing:-0.250px;right:529.05px;top:272.00px;-webkit-text-stroke:0.15px #161616;">(6.69)</span>
<span class="t" style="font-family:'DejaVu Sans Condensed', 'DejaVu Sans', 'Liberation Sans', sans-serif;font-size:9.3px;color:#161616;letter-spacing:-0.250px;right:448.95px;top:272.00px;-webkit-text-stroke:0.15px #161616;">2.54</span>
<span class="t" style="font-family:'DejaVu Sans Condensed', 'DejaVu Sans', 'Liberation Sans', sans-serif;font-size:9.3px;color:#161616;letter-spacing:-0.250px;right:365.65px;top:272.00px;-webkit-text-stroke:0.15px #161616;">26.23</span>
<span class="t" style="font-family:'DejaVu Sans Condensed', 'DejaVu Sans', 'Liberation Sans', sans-serif;font-size:9.3px;color:#161616;letter-spacing:-0.250px;right:282.25px;top:272.00px;-webkit-text-stroke:0.15px #161616;">77.66</span>
<span class="t" style="font-family:'DejaVu Sans Condensed', 'DejaVu Sans', 'Liberation Sans', sans-serif;font-size:9.3px;color:#161616;letter-spacing:-0.250px;right:194.25px;top:272.00px;-webkit-text-stroke:0.15px #161616;">170.68</span>
<span class="t" style="font-family:'DejaVu Sans Condensed', 'DejaVu Sans', 'Liberation Sans', sans-serif;font-size:10.5px;color:#161616;letter-spacing:-0.390px;left:57.60px;top:286.00px;word-spacing:1px;-webkit-text-stroke:0.15px #161616;">CAPEX Coverage</span>
<span class="t" style="font-family:'DejaVu Sans Condensed', 'DejaVu Sans', 'Liberation Sans', sans-serif;font-size:9.3px;color:#161616;font-style:italic;letter-spacing:-0.150px;left:326.00px;top:287.00px;-webkit-text-stroke:0.15px #161616;">Capital Expenditure / Operating Cash Flow</span>
<span class="t" style="font-family:'DejaVu Sans Condensed', 'DejaVu Sans', 'Liberation Sans', sans-serif;font-size:9.3px;color:#161616;letter-spacing:-0.250px;right:529.05px;top:287.00px;-webkit-text-stroke:0.15px #161616;">(0.56)</span>
<span class="t" style="font-family:'DejaVu Sans Condensed', 'DejaVu Sans', 'Liberation Sans', sans-serif;font-size:9.3px;color:#161616;letter-spacing:-0.250px;right:449.45px;top:287.00px;-webkit-text-stroke:0.15px #161616;">-</span>
<span class="t" style="font-family:'DejaVu Sans Condensed', 'DejaVu Sans', 'Liberation Sans', sans-serif;font-size:9.3px;color:#161616;letter-spacing:-0.250px;right:366.15px;top:287.00px;-webkit-text-stroke:0.15px #161616;">-</span>
<span class="t" style="font-family:'DejaVu Sans Condensed', 'DejaVu Sans', 'Liberation Sans', sans-serif;font-size:9.3px;color:#161616;letter-spacing:-0.250px;right:282.75px;top:287.00px;-webkit-text-stroke:0.15px #161616;">-</span>
<span class="t" style="font-family:'DejaVu Sans Condensed', 'DejaVu Sans', 'Liberation Sans', sans-serif;font-size:9.3px;color:#161616;letter-spacing:-0.250px;right:194.75px;top:287.00px;-webkit-text-stroke:0.15px #161616;">-</span>
<span class="t" style="font-family:'DejaVu Sans Condensed', 'DejaVu Sans', 'Liberation Sans', sans-serif;font-size:10.5px;color:#161616;letter-spacing:-0.390px;left:57.60px;top:301.00px;word-spacing:1px;-webkit-text-stroke:0.15px #161616;">Dividends Coverage</span>
<span class="t" style="font-family:'DejaVu Sans Condensed', 'DejaVu Sans', 'Liberation Sans', sans-serif;font-size:9.3px;color:#161616;font-style:italic;letter-spacing:-0.150px;left:326.00px;top:301.00px;-webkit-text-stroke:0.15px #161616;">Dividends / Operating Cash Flow</span>
<span class="t" style="font-family:'DejaVu Sans Condensed', 'DejaVu Sans', 'Liberation Sans', sans-serif;font-size:9.3px;color:#161616;letter-spacing:-0.250px;right:532.75px;top:301.00px;-webkit-text-stroke:0.15px #161616;">-</span>
<span class="t" style="font-family:'DejaVu Sans Condensed', 'DejaVu Sans', 'Liberation Sans', sans-serif;font-size:9.3px;color:#161616;letter-spacing:-0.250px;right:449.45px;top:301.00px;-webkit-text-stroke:0.15px #161616;">-</span>
<span class="t" style="font-family:'DejaVu Sans Condensed', 'DejaVu Sans', 'Liberation Sans', sans-serif;font-size:9.3px;color:#161616;letter-spacing:-0.250px;right:366.15px;top:301.00px;-webkit-text-stroke:0.15px #161616;">-</span>
<span class="t" style="font-family:'DejaVu Sans Condensed', 'DejaVu Sans', 'Liberation Sans', sans-serif;font-size:9.3px;color:#161616;letter-spacing:-0.250px;right:282.75px;top:301.00px;-webkit-text-stroke:0.15px #161616;">-</span>
<span class="t" style="font-family:'DejaVu Sans Condensed', 'DejaVu Sans', 'Liberation Sans', sans-serif;font-size:9.3px;color:#161616;letter-spacing:-0.250px;right:194.75px;top:301.00px;-webkit-text-stroke:0.15px #161616;">-</span>
<span class="t" style="font-family:'DejaVu Sans Condensed', 'DejaVu Sans', 'Liberation Sans', sans-serif;font-size:10.5px;color:#161616;letter-spacing:-0.390px;left:57.60px;top:355.00px;word-spacing:1px;-webkit-text-stroke:0.15px #161616;">Liabilities to Assets Ratio</span>
<span class="t" style="font-family:'DejaVu Sans Condensed', 'DejaVu Sans', 'Liberation Sans', sans-serif;font-size:9.3px;color:#161616;font-style:italic;letter-spacing:-0.150px;left:326.00px;top:355.00px;-webkit-text-stroke:0.15px #161616;">Total Liabilities / Total Assets</span>
<span class="t" style="font-family:'DejaVu Sans Condensed', 'DejaVu Sans', 'Liberation Sans', sans-serif;font-size:9.3px;color:#161616;letter-spacing:-0.250px;right:532.25px;top:355.00px;-webkit-text-stroke:0.15px #161616;">0.33</span>
<span class="t" style="font-family:'DejaVu Sans Condensed', 'DejaVu Sans', 'Liberation Sans', sans-serif;font-size:9.3px;color:#161616;letter-spacing:-0.250px;right:448.95px;top:355.00px;-webkit-text-stroke:0.15px #161616;">0.39</span>
<span class="t" style="font-family:'DejaVu Sans Condensed', 'DejaVu Sans', 'Liberation Sans', sans-serif;font-size:9.3px;color:#161616;letter-spacing:-0.250px;right:365.65px;top:355.00px;-webkit-text-stroke:0.15px #161616;">0.20</span>
<span class="t" style="font-family:'DejaVu Sans Condensed', 'DejaVu Sans', 'Liberation Sans', sans-serif;font-size:9.3px;color:#161616;letter-spacing:-0.250px;right:282.25px;top:355.00px;-webkit-text-stroke:0.15px #161616;">0.07</span>
<span class="t" style="font-family:'DejaVu Sans Condensed', 'DejaVu Sans', 'Liberation Sans', sans-serif;font-size:9.3px;color:#161616;letter-spacing:-0.250px;right:194.25px;top:355.00px;-webkit-text-stroke:0.15px #161616;">0.03</span>
<span class="t" style="font-family:'DejaVu Sans Condensed', 'DejaVu Sans', 'Liberation Sans', sans-serif;font-size:10.5px;color:#161616;letter-spacing:-0.390px;left:57.60px;top:369.00px;word-spacing:1px;-webkit-text-stroke:0.15px #161616;">Liabilities to Equity Ratio</span>
<span class="t" style="font-family:'DejaVu Sans Condensed', 'DejaVu Sans', 'Liberation Sans', sans-serif;font-size:9.3px;color:#161616;font-style:italic;letter-spacing:-0.150px;left:326.00px;top:370.00px;-webkit-text-stroke:0.15px #161616;">Total Liabilities / Total Equity</span>
<span class="t" style="font-family:'DejaVu Sans Condensed', 'DejaVu Sans', 'Liberation Sans', sans-serif;font-size:9.3px;color:#161616;letter-spacing:-0.250px;right:532.25px;top:370.00px;-webkit-text-stroke:0.15px #161616;">0.49</span>
<span class="t" style="font-family:'DejaVu Sans Condensed', 'DejaVu Sans', 'Liberation Sans', sans-serif;font-size:9.3px;color:#161616;letter-spacing:-0.250px;right:448.95px;top:370.00px;-webkit-text-stroke:0.15px #161616;">0.64</span>
<span class="t" style="font-family:'DejaVu Sans Condensed', 'DejaVu Sans', 'Liberation Sans', sans-serif;font-size:9.3px;color:#161616;letter-spacing:-0.250px;right:365.65px;top:370.00px;-webkit-text-stroke:0.15px #161616;">0.25</span>
<span class="t" style="font-family:'DejaVu Sans Condensed', 'DejaVu Sans', 'Liberation Sans', sans-serif;font-size:9.3px;color:#161616;letter-spacing:-0.250px;right:282.25px;top:370.00px;-webkit-text-stroke:0.15px #161616;">0.08</span>
<span class="t" style="font-family:'DejaVu Sans Condensed', 'DejaVu Sans', 'Liberation Sans', sans-serif;font-size:9.3px;color:#161616;letter-spacing:-0.250px;right:194.25px;top:370.00px;-webkit-text-stroke:0.15px #161616;">0.03</span>
<span class="t" style="font-family:'DejaVu Sans Condensed', 'DejaVu Sans', 'Liberation Sans', sans-serif;font-size:10.5px;color:#161616;letter-spacing:-0.390px;left:57.60px;top:384.00px;word-spacing:1px;-webkit-text-stroke:0.15px #161616;">Capitalization Ratio (debts-to-equity)</span>
<span class="t" style="font-family:'DejaVu Sans Condensed', 'DejaVu Sans', 'Liberation Sans', sans-serif;font-size:9.3px;color:#161616;font-style:italic;letter-spacing:-0.150px;left:326.00px;top:384.00px;-webkit-text-stroke:0.15px #161616;">Debts / Total Equity</span>
<span class="t" style="font-family:'DejaVu Sans Condensed', 'DejaVu Sans', 'Liberation Sans', sans-serif;font-size:9.3px;color:#161616;letter-spacing:-0.250px;right:532.25px;top:384.00px;-webkit-text-stroke:0.15px #161616;">0.44</span>
<span class="t" style="font-family:'DejaVu Sans Condensed', 'DejaVu Sans', 'Liberation Sans', sans-serif;font-size:9.3px;color:#161616;letter-spacing:-0.250px;right:448.95px;top:384.00px;-webkit-text-stroke:0.15px #161616;">0.54</span>
<span class="t" style="font-family:'DejaVu Sans Condensed', 'DejaVu Sans', 'Liberation Sans', sans-serif;font-size:9.3px;color:#161616;letter-spacing:-0.250px;right:365.65px;top:384.00px;-webkit-text-stroke:0.15px #161616;">0.18</span>
<span class="t" style="font-family:'DejaVu Sans Condensed', 'DejaVu Sans', 'Liberation Sans', sans-serif;font-size:9.3px;color:#161616;letter-spacing:-0.250px;right:282.25px;top:384.00px;-webkit-text-stroke:0.15px #161616;">0.05</span>
<span class="t" style="font-family:'DejaVu Sans Condensed', 'DejaVu Sans', 'Liberation Sans', sans-serif;font-size:9.3px;color:#161616;letter-spacing:-0.250px;right:194.25px;top:384.00px;-webkit-text-stroke:0.15px #161616;">0.01</span>
<span class="t" style="font-family:'DejaVu Sans Condensed', 'DejaVu Sans', 'Liberation Sans', sans-serif;font-size:10.5px;color:#161616;letter-spacing:-0.390px;left:57.60px;top:398.00px;word-spacing:1px;-webkit-text-stroke:0.15px #161616;">Interest Coverage Ratio</span>
<span class="t" style="font-family:'DejaVu Sans Condensed', 'DejaVu Sans', 'Liberation Sans', sans-serif;font-size:9.3px;color:#161616;font-style:italic;letter-spacing:-0.150px;left:326.00px;top:399.00px;-webkit-text-stroke:0.15px #161616;">Interest / Net Operating Income</span>
<span class="t" style="font-family:'DejaVu Sans Condensed', 'DejaVu Sans', 'Liberation Sans', sans-serif;font-size:9.3px;color:#161616;letter-spacing:-0.250px;right:529.05px;top:399.00px;-webkit-text-stroke:0.15px #161616;">(0.07)</span>
<span class="t" style="font-family:'DejaVu Sans Condensed', 'DejaVu Sans', 'Liberation Sans', sans-serif;font-size:9.3px;color:#161616;letter-spacing:-0.250px;right:448.95px;top:399.00px;-webkit-text-stroke:0.15px #161616;">0.12</span>
<span class="t" style="font-family:'DejaVu Sans Condensed', 'DejaVu Sans', 'Liberation Sans', sans-serif;font-size:9.3px;color:#161616;letter-spacing:-0.250px;right:365.65px;top:399.00px;-webkit-text-stroke:0.15px #161616;">0.01</span>
<span class="t" style="font-family:'DejaVu Sans Condensed', 'DejaVu Sans', 'Liberation Sans', sans-serif;font-size:9.3px;color:#161616;letter-spacing:-0.250px;right:282.25px;top:399.00px;-webkit-text-stroke:0.15px #161616;">0.00</span>
<span class="t" style="font-family:'DejaVu Sans Condensed', 'DejaVu Sans', 'Liberation Sans', sans-serif;font-size:9.3px;color:#161616;letter-spacing:-0.250px;right:194.25px;top:399.00px;-webkit-text-stroke:0.15px #161616;">0.00</span>
<span class="t" style="font-family:'DejaVu Sans Condensed', 'DejaVu Sans', 'Liberation Sans', sans-serif;font-size:10.5px;color:#161616;letter-spacing:-0.390px;left:57.60px;top:412.00px;word-spacing:1px;-webkit-text-stroke:0.15px #161616;">Cash Flow Ratio</span>
<span class="t" style="font-family:'DejaVu Sans Condensed', 'DejaVu Sans', 'Liberation Sans', sans-serif;font-size:9.3px;color:#161616;font-style:italic;letter-spacing:-0.150px;left:326.00px;top:413.00px;-webkit-text-stroke:0.15px #161616;">Operating Cash Flow / Debts</span>
<span class="t" style="font-family:'DejaVu Sans Condensed', 'DejaVu Sans', 'Liberation Sans', sans-serif;font-size:9.3px;color:#161616;letter-spacing:-0.250px;right:529.05px;top:413.00px;-webkit-text-stroke:0.15px #161616;">(1.03)</span>
<span class="t" style="font-family:'DejaVu Sans Condensed', 'DejaVu Sans', 'Liberation Sans', sans-serif;font-size:9.3px;color:#161616;letter-spacing:-0.250px;right:448.95px;top:413.00px;-webkit-text-stroke:0.15px #161616;">0.32</span>
<span class="t" style="font-family:'DejaVu Sans Condensed', 'DejaVu Sans', 'Liberation Sans', sans-serif;font-size:9.3px;color:#161616;letter-spacing:-0.250px;right:365.65px;top:413.00px;-webkit-text-stroke:0.15px #161616;">5.26</span>
<span class="t" style="font-family:'DejaVu Sans Condensed', 'DejaVu Sans', 'Liberation Sans', sans-serif;font-size:9.3px;color:#161616;letter-spacing:-0.250px;right:282.25px;top:413.00px;-webkit-text-stroke:0.15px #161616;">20.43</span>
<span class="t" style="font-family:'DejaVu Sans Condensed', 'DejaVu Sans', 'Liberation Sans', sans-serif;font-size:9.3px;color:#161616;letter-spacing:-0.250px;right:194.25px;top:413.00px;-webkit-text-stroke:0.15px #161616;">63.72</span>
<span class="t" style="font-family:'DejaVu Sans Condensed', 'DejaVu Sans', 'Liberation Sans', sans-serif;font-size:10.5px;color:#161616;letter-spacing:-0.390px;left:57.60px;top:466.00px;word-spacing:1px;-webkit-text-stroke:0.15px #161616;">Current Ratio</span>
<span class="t" style="font-family:'DejaVu Sans Condensed', 'DejaVu Sans', 'Liberation Sans', sans-serif;font-size:9.3px;color:#161616;font-style:italic;letter-spacing:-0.150px;left:326.00px;top:467.00px;-webkit-text-stroke:0.15px #161616;">Current Assets / Current Liabilities</span>
<span class="t" style="font-family:'DejaVu Sans Condensed', 'DejaVu Sans', 'Liberation Sans', sans-serif;font-size:9.3px;color:#161616;letter-spacing:-0.250px;right:532.25px;top:467.00px;-webkit-text-stroke:0.15px #161616;">26.24</span>
<span class="t" style="font-family:'DejaVu Sans Condensed', 'DejaVu Sans', 'Liberation Sans', sans-serif;font-size:9.3px;color:#161616;letter-spacing:-0.250px;right:448.95px;top:467.00px;-webkit-text-stroke:0.15px #161616;">13.65</span>
<span class="t" style="font-family:'DejaVu Sans Condensed', 'DejaVu Sans', 'Liberation Sans', sans-serif;font-size:9.3px;color:#161616;letter-spacing:-0.250px;right:365.65px;top:467.00px;-webkit-text-stroke:0.15px #161616;">17.90</span>
<span class="t" style="font-family:'DejaVu Sans Condensed', 'DejaVu Sans', 'Liberation Sans', sans-serif;font-size:9.3px;color:#161616;letter-spacing:-0.250px;right:282.25px;top:467.00px;-webkit-text-stroke:0.15px #161616;">35.44</span>
<span class="t" style="font-family:'DejaVu Sans Condensed', 'DejaVu Sans', 'Liberation Sans', sans-serif;font-size:9.3px;color:#161616;letter-spacing:-0.250px;right:194.25px;top:467.00px;-webkit-text-stroke:0.15px #161616;">62.08</span>
<span class="t" style="font-family:'DejaVu Sans Condensed', 'DejaVu Sans', 'Liberation Sans', sans-serif;font-size:10.5px;color:#161616;letter-spacing:-0.390px;left:57.60px;top:481.00px;word-spacing:1px;-webkit-text-stroke:0.15px #161616;">Quick Ratio</span>
<span class="t" style="font-family:'DejaVu Sans Condensed', 'DejaVu Sans', 'Liberation Sans', sans-serif;font-size:9.3px;color:#161616;font-style:italic;letter-spacing:-0.150px;left:326.00px;top:481.00px;-webkit-text-stroke:0.15px #161616;">(Current Assets - Inventory) / Current Liabilities</span>
<span class="t" style="font-family:'DejaVu Sans Condensed', 'DejaVu Sans', 'Liberation Sans', sans-serif;font-size:9.3px;color:#161616;letter-spacing:-0.250px;right:532.25px;top:481.00px;-webkit-text-stroke:0.15px #161616;">26.13</span>
<span class="t" style="font-family:'DejaVu Sans Condensed', 'DejaVu Sans', 'Liberation Sans', sans-serif;font-size:9.3px;color:#161616;letter-spacing:-0.250px;right:448.95px;top:481.00px;-webkit-text-stroke:0.15px #161616;">13.47</span>
<span class="t" style="font-family:'DejaVu Sans Condensed', 'DejaVu Sans', 'Liberation Sans', sans-serif;font-size:9.3px;color:#161616;letter-spacing:-0.250px;right:365.65px;top:481.00px;-webkit-text-stroke:0.15px #161616;">17.62</span>
<span class="t" style="font-family:'DejaVu Sans Condensed', 'DejaVu Sans', 'Liberation Sans', sans-serif;font-size:9.3px;color:#161616;letter-spacing:-0.250px;right:282.25px;top:481.00px;-webkit-text-stroke:0.15px #161616;">35.05</span>
<span class="t" style="font-family:'DejaVu Sans Condensed', 'DejaVu Sans', 'Liberation Sans', sans-serif;font-size:9.3px;color:#161616;letter-spacing:-0.250px;right:194.25px;top:481.00px;-webkit-text-stroke:0.15px #161616;">61.60</span>
<span class="t" style="font-family:'DejaVu Sans Condensed', 'DejaVu Sans', 'Liberation Sans', sans-serif;font-size:10.5px;color:#161616;letter-spacing:-0.390px;left:57.60px;top:495.00px;word-spacing:1px;-webkit-text-stroke:0.15px #161616;">Cash Ratio</span>
<span class="t" style="font-family:'DejaVu Sans Condensed', 'DejaVu Sans', 'Liberation Sans', sans-serif;font-size:9.3px;color:#161616;font-style:italic;letter-spacing:-0.150px;left:326.00px;top:496.00px;-webkit-text-stroke:0.15px #161616;">Cash / Current Liabilities</span>
<span class="t" style="font-family:'DejaVu Sans Condensed', 'DejaVu Sans', 'Liberation Sans', sans-serif;font-size:9.3px;color:#161616;letter-spacing:-0.250px;right:532.25px;top:496.00px;-webkit-text-stroke:0.15px #161616;">25.50</span>
<span class="t" style="font-family:'DejaVu Sans Condensed', 'DejaVu Sans', 'Liberation Sans', sans-serif;font-size:9.3px;color:#161616;letter-spacing:-0.250px;right:448.95px;top:496.00px;-webkit-text-stroke:0.15px #161616;">12.37</span>
<span class="t" style="font-family:'DejaVu Sans Condensed', 'DejaVu Sans', 'Liberation Sans', sans-serif;font-size:9.3px;color:#161616;letter-spacing:-0.250px;right:365.65px;top:496.00px;-webkit-text-stroke:0.15px #161616;">15.75</span>
<span class="t" style="font-family:'DejaVu Sans Condensed', 'DejaVu Sans', 'Liberation Sans', sans-serif;font-size:9.3px;color:#161616;letter-spacing:-0.250px;right:282.25px;top:496.00px;-webkit-text-stroke:0.15px #161616;">32.30</span>
<span class="t" style="font-family:'DejaVu Sans Condensed', 'DejaVu Sans', 'Liberation Sans', sans-serif;font-size:9.3px;color:#161616;letter-spacing:-0.250px;right:194.25px;top:496.00px;-webkit-text-stroke:0.15px #161616;">57.98</span>
<span class="t" style="font-family:'DejaVu Sans Condensed', 'DejaVu Sans', 'Liberation Sans', sans-serif;font-size:10.5px;color:#161616;letter-spacing:-0.390px;left:57.60px;top:549.00px;word-spacing:1px;-webkit-text-stroke:0.15px #161616;">Fixed Assets Turnover</span>
<span class="t" style="font-family:'DejaVu Sans Condensed', 'DejaVu Sans', 'Liberation Sans', sans-serif;font-size:9.3px;color:#161616;font-style:italic;letter-spacing:-0.150px;left:326.00px;top:550.00px;-webkit-text-stroke:0.15px #161616;">Sales / Average Fixed Assets</span>
<span class="t" style="font-family:'DejaVu Sans Condensed', 'DejaVu Sans', 'Liberation Sans', sans-serif;font-size:9.3px;color:#161616;letter-spacing:-0.250px;right:532.25px;top:550.00px;-webkit-text-stroke:0.15px #161616;">5.99</span>
<span class="t" style="font-family:'DejaVu Sans Condensed', 'DejaVu Sans', 'Liberation Sans', sans-serif;font-size:9.3px;color:#161616;letter-spacing:-0.250px;right:448.95px;top:550.00px;-webkit-text-stroke:0.15px #161616;">11.29</span>
<span class="t" style="font-family:'DejaVu Sans Condensed', 'DejaVu Sans', 'Liberation Sans', sans-serif;font-size:9.3px;color:#161616;letter-spacing:-0.250px;right:365.65px;top:550.00px;-webkit-text-stroke:0.15px #161616;">32.09</span>
<span class="t" style="font-family:'DejaVu Sans Condensed', 'DejaVu Sans', 'Liberation Sans', sans-serif;font-size:9.3px;color:#161616;letter-spacing:-0.250px;right:282.25px;top:550.00px;-webkit-text-stroke:0.15px #161616;">78.24</span>
<span class="t" style="font-family:'DejaVu Sans Condensed', 'DejaVu Sans', 'Liberation Sans', sans-serif;font-size:9.3px;color:#161616;letter-spacing:-0.250px;right:194.25px;top:550.00px;-webkit-text-stroke:0.15px #161616;">173.97</span>
<span class="t" style="font-family:'DejaVu Sans Condensed', 'DejaVu Sans', 'Liberation Sans', sans-serif;font-size:10.5px;color:#161616;letter-spacing:-0.390px;left:57.60px;top:564.00px;word-spacing:1px;-webkit-text-stroke:0.15px #161616;">Inventory Turnover Ratio</span>
<span class="t" style="font-family:'DejaVu Sans Condensed', 'DejaVu Sans', 'Liberation Sans', sans-serif;font-size:9.3px;color:#161616;font-style:italic;letter-spacing:-0.150px;left:326.00px;top:564.00px;-webkit-text-stroke:0.15px #161616;">COGS / Average Inventory</span>
<span class="t" style="font-family:'DejaVu Sans Condensed', 'DejaVu Sans', 'Liberation Sans', sans-serif;font-size:9.3px;color:#161616;letter-spacing:-0.250px;right:532.25px;top:564.00px;-webkit-text-stroke:0.15px #161616;">20.41</span>
<span class="t" style="font-family:'DejaVu Sans Condensed', 'DejaVu Sans', 'Liberation Sans', sans-serif;font-size:9.3px;color:#161616;letter-spacing:-0.250px;right:448.95px;top:564.00px;-webkit-text-stroke:0.15px #161616;">19.44</span>
<span class="t" style="font-family:'DejaVu Sans Condensed', 'DejaVu Sans', 'Liberation Sans', sans-serif;font-size:9.3px;color:#161616;letter-spacing:-0.250px;right:365.65px;top:564.00px;-webkit-text-stroke:0.15px #161616;">18.78</span>
<span class="t" style="font-family:'DejaVu Sans Condensed', 'DejaVu Sans', 'Liberation Sans', sans-serif;font-size:9.3px;color:#161616;letter-spacing:-0.250px;right:282.25px;top:564.00px;-webkit-text-stroke:0.15px #161616;">18.91</span>
<span class="t" style="font-family:'DejaVu Sans Condensed', 'DejaVu Sans', 'Liberation Sans', sans-serif;font-size:9.3px;color:#161616;letter-spacing:-0.250px;right:194.25px;top:564.00px;-webkit-text-stroke:0.15px #161616;">19.02</span>
<span class="t" style="font-family:'DejaVu Sans Condensed', 'DejaVu Sans', 'Liberation Sans', sans-serif;font-size:10.5px;color:#161616;letter-spacing:-0.390px;left:57.60px;top:578.00px;word-spacing:1px;-webkit-text-stroke:0.15px #161616;">Revenue per Employee, $</span>
<span class="t" style="font-family:'DejaVu Sans Condensed', 'DejaVu Sans', 'Liberation Sans', sans-serif;font-size:9.3px;color:#161616;font-style:italic;letter-spacing:-0.150px;left:326.00px;top:579.00px;-webkit-text-stroke:0.15px #161616;">Revenue / FTE</span>
<span class="t" style="font-family:'DejaVu Sans Condensed', 'DejaVu Sans', 'Liberation Sans', sans-serif;font-size:9.3px;color:#161616;letter-spacing:-0.250px;right:532.25px;top:579.00px;-webkit-text-stroke:0.15px #161616;">239,974</span>
<span class="t" style="font-family:'DejaVu Sans Condensed', 'DejaVu Sans', 'Liberation Sans', sans-serif;font-size:9.3px;color:#161616;letter-spacing:-0.250px;right:448.95px;top:579.00px;-webkit-text-stroke:0.15px #161616;">345,969</span>
<span class="t" style="font-family:'DejaVu Sans Condensed', 'DejaVu Sans', 'Liberation Sans', sans-serif;font-size:9.3px;color:#161616;letter-spacing:-0.250px;right:365.65px;top:579.00px;-webkit-text-stroke:0.15px #161616;">667,810</span>
<span class="t" style="font-family:'DejaVu Sans Condensed', 'DejaVu Sans', 'Liberation Sans', sans-serif;font-size:9.3px;color:#161616;letter-spacing:-0.250px;right:282.25px;top:579.00px;-webkit-text-stroke:0.15px #161616;">1,326,527</span>
<span class="t" style="font-family:'DejaVu Sans Condensed', 'DejaVu Sans', 'Liberation Sans', sans-serif;font-size:9.3px;color:#161616;letter-spacing:-0.250px;right:194.25px;top:579.00px;-webkit-text-stroke:0.15px #161616;">2,289,962</span>
<span class="t" style="font-family:'DejaVu Sans Condensed', 'DejaVu Sans', 'Liberation Sans', sans-serif;font-size:10.5px;color:#161616;letter-spacing:-0.390px;left:57.60px;top:593.00px;word-spacing:1px;-webkit-text-stroke:0.15px #161616;">OPEX per Employee, $</span>
<span class="t" style="font-family:'DejaVu Sans Condensed', 'DejaVu Sans', 'Liberation Sans', sans-serif;font-size:9.3px;color:#161616;font-style:italic;letter-spacing:-0.150px;left:326.00px;top:593.00px;-webkit-text-stroke:0.15px #161616;">OPEX / FTE</span>
<span class="t" style="font-family:'DejaVu Sans Condensed', 'DejaVu Sans', 'Liberation Sans', sans-serif;font-size:9.3px;color:#161616;letter-spacing:-0.250px;right:532.25px;top:593.00px;-webkit-text-stroke:0.15px #161616;">325,367</span>
<span class="t" style="font-family:'DejaVu Sans Condensed', 'DejaVu Sans', 'Liberation Sans', sans-serif;font-size:9.3px;color:#161616;letter-spacing:-0.250px;right:448.95px;top:593.00px;-webkit-text-stroke:0.15px #161616;">263,334</span>
<span class="t" style="font-family:'DejaVu Sans Condensed', 'DejaVu Sans', 'Liberation Sans', sans-serif;font-size:9.3px;color:#161616;letter-spacing:-0.250px;right:365.65px;top:593.00px;-webkit-text-stroke:0.15px #161616;">280,456</span>
<span class="t" style="font-family:'DejaVu Sans Condensed', 'DejaVu Sans', 'Liberation Sans', sans-serif;font-size:9.3px;color:#161616;letter-spacing:-0.250px;right:282.25px;top:593.00px;-webkit-text-stroke:0.15px #161616;">337,820</span>
<span class="t" style="font-family:'DejaVu Sans Condensed', 'DejaVu Sans', 'Liberation Sans', sans-serif;font-size:9.3px;color:#161616;letter-spacing:-0.250px;right:194.25px;top:593.00px;-webkit-text-stroke:0.15px #161616;">400,619</span>
<span class="t" style="font-family:'DejaVu Sans Condensed', 'DejaVu Sans', 'Liberation Sans', sans-serif;font-size:10.5px;color:#161616;letter-spacing:-0.390px;left:57.60px;top:607.00px;word-spacing:1px;-webkit-text-stroke:0.15px #161616;">EBITDA per Employee, $</span>
<span class="t" style="font-family:'DejaVu Sans Condensed', 'DejaVu Sans', 'Liberation Sans', sans-serif;font-size:9.3px;color:#161616;font-style:italic;letter-spacing:-0.150px;left:326.00px;top:608.00px;-webkit-text-stroke:0.15px #161616;">EBITDA / FTE</span>
<span class="t" style="font-family:'DejaVu Sans Condensed', 'DejaVu Sans', 'Liberation Sans', sans-serif;font-size:9.3px;color:#161616;letter-spacing:-0.250px;right:529.05px;top:608.00px;-webkit-text-stroke:0.15px #161616;">(116,589)</span>
<span class="t" style="font-family:'DejaVu Sans Condensed', 'DejaVu Sans', 'Liberation Sans', sans-serif;font-size:9.3px;color:#161616;letter-spacing:-0.250px;right:448.95px;top:608.00px;-webkit-text-stroke:0.15px #161616;">40,081</span>
<span class="t" style="font-family:'DejaVu Sans Condensed', 'DejaVu Sans', 'Liberation Sans', sans-serif;font-size:9.3px;color:#161616;letter-spacing:-0.250px;right:365.65px;top:608.00px;-webkit-text-stroke:0.15px #161616;">310,556</span>
<span class="t" style="font-family:'DejaVu Sans Condensed', 'DejaVu Sans', 'Liberation Sans', sans-serif;font-size:9.3px;color:#161616;letter-spacing:-0.250px;right:282.25px;top:608.00px;-webkit-text-stroke:0.15px #161616;">846,769</span>
<span class="t" style="font-family:'DejaVu Sans Condensed', 'DejaVu Sans', 'Liberation Sans', sans-serif;font-size:9.3px;color:#161616;letter-spacing:-0.250px;right:194.25px;top:608.00px;-webkit-text-stroke:0.15px #161616;">1,660,347</span>
<span class="t" style="font-family:'DejaVu Sans Condensed', 'DejaVu Sans', 'Liberation Sans', sans-serif;font-size:10.5px;color:#161616;letter-spacing:-0.390px;left:57.60px;top:661.00px;word-spacing:1px;-webkit-text-stroke:0.15px #161616;">Gross Margin %</span>
<span class="t" style="font-family:'DejaVu Sans Condensed', 'DejaVu Sans', 'Liberation Sans', sans-serif;font-size:9.3px;color:#161616;font-style:italic;letter-spacing:-0.150px;left:326.00px;top:662.00px;-webkit-text-stroke:0.15px #161616;">(Revenue - COGS) / Revenue</span>
<span class="t" style="font-family:'DejaVu Sans Condensed', 'DejaVu Sans', 'Liberation Sans', sans-serif;font-size:9.3px;color:#161616;letter-spacing:-0.250px;right:528.75px;top:662.00px;-webkit-text-stroke:0.15px #161616;">87.0%</span>
<span class="t" style="font-family:'DejaVu Sans Condensed', 'DejaVu Sans', 'Liberation Sans', sans-serif;font-size:9.3px;color:#161616;letter-spacing:-0.250px;right:445.45px;top:662.00px;-webkit-text-stroke:0.15px #161616;">87.7%</span>
<span class="t" style="font-family:'DejaVu Sans Condensed', 'DejaVu Sans', 'Liberation Sans', sans-serif;font-size:9.3px;color:#161616;letter-spacing:-0.250px;right:362.15px;top:662.00px;-webkit-text-stroke:0.15px #161616;">88.5%</span>
<span class="t" style="font-family:'DejaVu Sans Condensed', 'DejaVu Sans', 'Liberation Sans', sans-serif;font-size:9.3px;color:#161616;letter-spacing:-0.250px;right:278.75px;top:662.00px;-webkit-text-stroke:0.15px #161616;">89.3%</span>
<span class="t" style="font-family:'DejaVu Sans Condensed', 'DejaVu Sans', 'Liberation Sans', sans-serif;font-size:9.3px;color:#161616;letter-spacing:-0.250px;right:190.75px;top:662.00px;-webkit-text-stroke:0.15px #161616;">90.0%</span>
<span class="t" style="font-family:'DejaVu Sans Condensed', 'DejaVu Sans', 'Liberation Sans', sans-serif;font-size:10.5px;color:#161616;letter-spacing:-0.390px;left:57.60px;top:675.00px;word-spacing:1px;-webkit-text-stroke:0.15px #161616;">Contribution Margin %</span>
<span class="t" style="font-family:'DejaVu Sans Condensed', 'DejaVu Sans', 'Liberation Sans', sans-serif;font-size:9.3px;color:#161616;font-style:italic;letter-spacing:-0.150px;left:326.00px;top:676.00px;-webkit-text-stroke:0.15px #161616;">(Revenue - COGS - Variable Expenses) / Revenue</span>
<span class="t" style="font-family:'DejaVu Sans Condensed', 'DejaVu Sans', 'Liberation Sans', sans-serif;font-size:9.3px;color:#161616;letter-spacing:-0.250px;right:528.75px;top:676.00px;-webkit-text-stroke:0.15px #161616;">17.5%</span>
<span class="t" style="font-family:'DejaVu Sans Condensed', 'DejaVu Sans', 'Liberation Sans', sans-serif;font-size:9.3px;color:#161616;letter-spacing:-0.250px;right:445.45px;top:676.00px;-webkit-text-stroke:0.15px #161616;">44.9%</span>
<span class="t" style="font-family:'DejaVu Sans Condensed', 'DejaVu Sans', 'Liberation Sans', sans-serif;font-size:9.3px;color:#161616;letter-spacing:-0.250px;right:362.15px;top:676.00px;-webkit-text-stroke:0.15px #161616;">62.0%</span>
<span class="t" style="font-family:'DejaVu Sans Condensed', 'DejaVu Sans', 'Liberation Sans', sans-serif;font-size:9.3px;color:#161616;letter-spacing:-0.250px;right:278.75px;top:676.00px;-webkit-text-stroke:0.15px #161616;">71.7%</span>
<span class="t" style="font-family:'DejaVu Sans Condensed', 'DejaVu Sans', 'Liberation Sans', sans-serif;font-size:9.3px;color:#161616;letter-spacing:-0.250px;right:190.75px;top:676.00px;-webkit-text-stroke:0.15px #161616;">77.1%</span>
<span class="t" style="font-family:'DejaVu Sans Condensed', 'DejaVu Sans', 'Liberation Sans', sans-serif;font-size:10.5px;color:#161616;letter-spacing:-0.390px;left:57.60px;top:690.00px;word-spacing:1px;-webkit-text-stroke:0.15px #161616;">EBITDA %</span>
<span class="t" style="font-family:'DejaVu Sans Condensed', 'DejaVu Sans', 'Liberation Sans', sans-serif;font-size:9.3px;color:#161616;font-style:italic;letter-spacing:-0.150px;left:326.00px;top:690.00px;-webkit-text-stroke:0.15px #161616;">(Revenue - COGS - Var Expenses - Fix Expenses) / Revenue</span>
<span class="t" style="font-family:'DejaVu Sans Condensed', 'DejaVu Sans', 'Liberation Sans', sans-serif;font-size:9.3px;color:#161616;letter-spacing:-0.250px;right:528.75px;top:690.00px;-webkit-text-stroke:0.15px #161616;">-48.6%</span>
<span class="t" style="font-family:'DejaVu Sans Condensed', 'DejaVu Sans', 'Liberation Sans', sans-serif;font-size:9.3px;color:#161616;letter-spacing:-0.250px;right:445.45px;top:690.00px;-webkit-text-stroke:0.15px #161616;">11.6%</span>
<span class="t" style="font-family:'DejaVu Sans Condensed', 'DejaVu Sans', 'Liberation Sans', sans-serif;font-size:9.3px;color:#161616;letter-spacing:-0.250px;right:362.15px;top:690.00px;-webkit-text-stroke:0.15px #161616;">46.5%</span>
<span class="t" style="font-family:'DejaVu Sans Condensed', 'DejaVu Sans', 'Liberation Sans', sans-serif;font-size:9.3px;color:#161616;letter-spacing:-0.250px;right:278.75px;top:690.00px;-webkit-text-stroke:0.15px #161616;">63.8%</span>
<span class="t" style="font-family:'DejaVu Sans Condensed', 'DejaVu Sans', 'Liberation Sans', sans-serif;font-size:9.3px;color:#161616;letter-spacing:-0.250px;right:190.75px;top:690.00px;-webkit-text-stroke:0.15px #161616;">72.5%</span>
<span class="t" style="font-family:'DejaVu Sans Condensed', 'DejaVu Sans', 'Liberation Sans', sans-serif;font-size:10.5px;color:#161616;letter-spacing:-0.390px;left:57.60px;top:704.00px;word-spacing:1px;-webkit-text-stroke:0.15px #161616;">EBIT %</span>
<span class="t" style="font-family:'DejaVu Sans Condensed', 'DejaVu Sans', 'Liberation Sans', sans-serif;font-size:9.3px;color:#161616;font-style:italic;letter-spacing:-0.150px;left:326.00px;top:705.00px;-webkit-text-stroke:0.15px #161616;">(EBITDA - Depreciation &amp; Amortization) / Revenue</span>
<span class="t" style="font-family:'DejaVu Sans Condensed', 'DejaVu Sans', 'Liberation Sans', sans-serif;font-size:9.3px;color:#161616;letter-spacing:-0.250px;right:528.75px;top:705.00px;-webkit-text-stroke:0.15px #161616;">-51.0%</span>
<span class="t" style="font-family:'DejaVu Sans Condensed', 'DejaVu Sans', 'Liberation Sans', sans-serif;font-size:9.3px;color:#161616;letter-spacing:-0.250px;right:445.45px;top:705.00px;-webkit-text-stroke:0.15px #161616;">10.6%</span>
<span class="t" style="font-family:'DejaVu Sans Condensed', 'DejaVu Sans', 'Liberation Sans', sans-serif;font-size:9.3px;color:#161616;letter-spacing:-0.250px;right:362.15px;top:705.00px;-webkit-text-stroke:0.15px #161616;">46.1%</span>
<span class="t" style="font-family:'DejaVu Sans Condensed', 'DejaVu Sans', 'Liberation Sans', sans-serif;font-size:9.3px;color:#161616;letter-spacing:-0.250px;right:278.75px;top:705.00px;-webkit-text-stroke:0.15px #161616;">63.6%</span>
<span class="t" style="font-family:'DejaVu Sans Condensed', 'DejaVu Sans', 'Liberation Sans', sans-serif;font-size:9.3px;color:#161616;letter-spacing:-0.250px;right:190.75px;top:705.00px;-webkit-text-stroke:0.15px #161616;">72.4%</span>
<span class="t" style="font-family:'DejaVu Sans Condensed', 'DejaVu Sans', 'Liberation Sans', sans-serif;font-size:10.5px;color:#161616;letter-spacing:-0.390px;left:57.60px;top:719.00px;word-spacing:1px;-webkit-text-stroke:0.15px #161616;">Net Profit Before Tax %</span>
<span class="t" style="font-family:'DejaVu Sans Condensed', 'DejaVu Sans', 'Liberation Sans', sans-serif;font-size:9.3px;color:#161616;font-style:italic;letter-spacing:-0.150px;left:326.00px;top:719.00px;-webkit-text-stroke:0.15px #161616;">(EBIT - Interest Expenses) / Revenue</span>
<span class="t" style="font-family:'DejaVu Sans Condensed', 'DejaVu Sans', 'Liberation Sans', sans-serif;font-size:9.3px;color:#161616;letter-spacing:-0.250px;right:528.75px;top:719.00px;-webkit-text-stroke:0.15px #161616;">-54.8%</span>
<span class="t" style="font-family:'DejaVu Sans Condensed', 'DejaVu Sans', 'Liberation Sans', sans-serif;font-size:9.3px;color:#161616;letter-spacing:-0.250px;right:445.45px;top:719.00px;-webkit-text-stroke:0.15px #161616;">9.3%</span>
<span class="t" style="font-family:'DejaVu Sans Condensed', 'DejaVu Sans', 'Liberation Sans', sans-serif;font-size:9.3px;color:#161616;letter-spacing:-0.250px;right:362.15px;top:719.00px;-webkit-text-stroke:0.15px #161616;">45.7%</span>
<span class="t" style="font-family:'DejaVu Sans Condensed', 'DejaVu Sans', 'Liberation Sans', sans-serif;font-size:9.3px;color:#161616;letter-spacing:-0.250px;right:278.75px;top:719.00px;-webkit-text-stroke:0.15px #161616;">63.5%</span>
<span class="t" style="font-family:'DejaVu Sans Condensed', 'DejaVu Sans', 'Liberation Sans', sans-serif;font-size:9.3px;color:#161616;letter-spacing:-0.250px;right:190.75px;top:719.00px;-webkit-text-stroke:0.15px #161616;">72.4%</span>
<span class="t" style="font-family:'DejaVu Sans Condensed', 'DejaVu Sans', 'Liberation Sans', sans-serif;font-size:10.5px;color:#161616;letter-spacing:-0.390px;left:57.60px;top:733.00px;word-spacing:1px;-webkit-text-stroke:0.15px #161616;">Net Profit After Tax %</span>
<span class="t" style="font-family:'DejaVu Sans Condensed', 'DejaVu Sans', 'Liberation Sans', sans-serif;font-size:9.3px;color:#161616;font-style:italic;letter-spacing:-0.150px;left:326.00px;top:734.00px;-webkit-text-stroke:0.15px #161616;">(EBIT - Interest Expenses - Taxes) / Revenue</span>
<span class="t" style="font-family:'DejaVu Sans Condensed', 'DejaVu Sans', 'Liberation Sans', sans-serif;font-size:9.3px;color:#161616;letter-spacing:-0.250px;right:528.75px;top:734.00px;-webkit-text-stroke:0.15px #161616;">-54.8%</span>
<span class="t" style="font-family:'DejaVu Sans Condensed', 'DejaVu Sans', 'Liberation Sans', sans-serif;font-size:9.3px;color:#161616;letter-spacing:-0.250px;right:445.45px;top:734.00px;-webkit-text-stroke:0.15px #161616;">7.0%</span>
<span class="t" style="font-family:'DejaVu Sans Condensed', 'DejaVu Sans', 'Liberation Sans', sans-serif;font-size:9.3px;color:#161616;letter-spacing:-0.250px;right:362.15px;top:734.00px;-webkit-text-stroke:0.15px #161616;">34.3%</span>
<span class="t" style="font-family:'DejaVu Sans Condensed', 'DejaVu Sans', 'Liberation Sans', sans-serif;font-size:9.3px;color:#161616;letter-spacing:-0.250px;right:278.75px;top:734.00px;-webkit-text-stroke:0.15px #161616;">47.6%</span>
<span class="t" style="font-family:'DejaVu Sans Condensed', 'DejaVu Sans', 'Liberation Sans', sans-serif;font-size:9.3px;color:#161616;letter-spacing:-0.250px;right:190.75px;top:734.00px;-webkit-text-stroke:0.15px #161616;">54.3%</span>
<span class="t" style="font-family:'DejaVu Sans Condensed', 'DejaVu Sans', 'Liberation Sans', sans-serif;font-size:10.5px;color:#161616;letter-spacing:-0.390px;left:57.60px;top:786.00px;word-spacing:1px;clip-path:inset(0 0 6.0px 0);-webkit-text-stroke:0.15px #161616;">ROA (Return of Assets)</span>
<span class="t" style="font-family:'DejaVu Sans Condensed', 'DejaVu Sans', 'Liberation Sans', sans-serif;font-size:9.3px;color:#161616;font-style:italic;letter-spacing:-0.150px;left:326.00px;top:787.00px;clip-path:inset(0 0 7.0px 0);-webkit-text-stroke:0.15px #161616;">Net Income / Total Assets</span>
<span class="t" style="font-family:'DejaVu Sans Condensed', 'DejaVu Sans', 'Liberation Sans', sans-serif;font-size:9.3px;color:#161616;letter-spacing:-0.250px;right:529.05px;top:787.00px;clip-path:inset(0 0 7.0px 0);-webkit-text-stroke:0.15px #161616;">(0.35)</span>
<span class="t" style="font-family:'DejaVu Sans Condensed', 'DejaVu Sans', 'Liberation Sans', sans-serif;font-size:9.3px;color:#161616;letter-spacing:-0.250px;right:445.75px;top:787.00px;clip-path:inset(0 0 7.0px 0);-webkit-text-stroke:0.15px #161616;">(0.20)</span>
<span class="t" style="font-family:'DejaVu Sans Condensed', 'DejaVu Sans', 'Liberation Sans', sans-serif;font-size:9.3px;color:#161616;letter-spacing:-0.250px;right:365.65px;top:787.00px;clip-path:inset(0 0 7.0px 0);-webkit-text-stroke:0.15px #161616;">0.51</span>
<span class="t" style="font-family:'DejaVu Sans Condensed', 'DejaVu Sans', 'Liberation Sans', sans-serif;font-size:9.3px;color:#161616;letter-spacing:-0.250px;right:282.25px;top:787.00px;clip-path:inset(0 0 7.0px 0);-webkit-text-stroke:0.15px #161616;">0.83</span>
<span class="t" style="font-family:'DejaVu Sans Condensed', 'DejaVu Sans', 'Liberation Sans', sans-serif;font-size:9.3px;color:#161616;letter-spacing:-0.250px;right:194.25px;top:787.00px;clip-path:inset(0 0 7.0px 0);-webkit-text-stroke:0.15px #161616;">0.93</span>
<span class="t" style="font-family:'Liberation Sans', sans-serif;font-size:9.6px;color:#f2f2f2;left:45.16px;top:14.00px;transform:scaleX(0.9133);transform-origin:0 50%;-webkit-text-stroke:0.18px #f2f2f2;">one-for-one-tree-planting-retailer.xlsx</span>
<span class="t" style="font-family:'Liberation Sans', sans-serif;font-size:9.6px;color:#f2f2f2;left:193.53px;top:14.00px;transform:scaleX(0.9808);transform-origin:0 50%;-webkit-text-stroke:0.18px #f2f2f2;">-</span>
<span class="t" style="font-family:'Liberation Sans', sans-serif;font-size:9.6px;color:#f2f2f2;left:201.08px;top:14.00px;transform:scaleX(0.8731);transform-origin:0 50%;-webkit-text-stroke:0.18px #f2f2f2;">Read-Only</span>
<span class="t" style="font-family:'Liberation Sans', sans-serif;font-size:10.4px;color:#f2f2f2;left:19.63px;top:43.00px;transform:scaleX(0.8975);transform-origin:0 50%;-webkit-text-stroke:0.18px #f2f2f2;">File</span>
<span class="t" style="font-family:'Liberation Sans', sans-serif;font-size:10.4px;color:#f2f2f2;left:94.43px;top:43.00px;transform:scaleX(0.9095);transform-origin:0 50%;-webkit-text-stroke:0.18px #f2f2f2;">Insert</span>
<span class="t" style="font-family:'Liberation Sans', sans-serif;font-size:10.4px;color:#f2f2f2;left:132.22px;top:43.00px;transform:scaleX(0.9220);transform-origin:0 50%;-webkit-text-stroke:0.18px #f2f2f2;">Draw</span>
<span class="t" style="font-family:'Liberation Sans', sans-serif;font-size:10.4px;color:#f2f2f2;left:168.74px;top:43.00px;transform:scaleX(0.8793);transform-origin:0 50%;-webkit-text-stroke:0.18px #f2f2f2;">Page Layout</span>
<span class="t" style="font-family:'Liberation Sans', sans-serif;font-size:10.4px;color:#f2f2f2;left:235.03px;top:43.00px;transform:scaleX(0.9037);transform-origin:0 50%;-webkit-text-stroke:0.18px #f2f2f2;">Formulas</span>
<span class="t" style="font-family:'Liberation Sans', sans-serif;font-size:10.4px;color:#f2f2f2;left:287.13px;top:43.00px;transform:scaleX(0.9133);transform-origin:0 50%;-webkit-text-stroke:0.18px #f2f2f2;">Data</span>
<span class="t" style="font-family:'Liberation Sans', sans-serif;font-size:10.4px;color:#f2f2f2;left:321.15px;top:43.00px;transform:scaleX(0.8717);transform-origin:0 50%;-webkit-text-stroke:0.18px #f2f2f2;">Review</span>
<span class="t" style="font-family:'Liberation Sans', sans-serif;font-size:10.4px;color:#f2f2f2;left:364.51px;top:43.00px;transform:scaleX(0.9341);transform-origin:0 50%;-webkit-text-stroke:0.18px #f2f2f2;">View</span>
<span class="t" style="font-family:'Liberation Sans', sans-serif;font-size:10.4px;color:#f2f2f2;left:399.00px;top:43.00px;transform:scaleX(0.9552);transform-origin:0 50%;-webkit-text-stroke:0.18px #f2f2f2;">Automate</span>
<span class="t" style="font-family:'Liberation Sans', sans-serif;font-size:10.4px;color:#f2f2f2;left:455.10px;top:43.00px;transform:scaleX(0.9540);transform-origin:0 50%;-webkit-text-stroke:0.18px #f2f2f2;">Help</span>
<span class="t" style="font-family:'Liberation Sans', sans-serif;font-size:10.4px;color:#fff;font-weight:700;left:52.90px;top:43.00px;transform:scaleX(0.9592);transform-origin:0 50%;">Home</span>
<span class="t" style="font-family:'Liberation Sans', sans-serif;font-size:9.6px;color:#f2f2f2;left:1270.13px;top:42.00px;transform:scaleX(0.9861);transform-origin:0 50%;-webkit-text-stroke:0.18px #f2f2f2;">Comments</span>
<span class="t" style="font-family:'Liberation Sans', sans-serif;font-size:9.6px;color:#0b0b0b;left:1340.05px;top:42.00px;transform:scaleX(0.9331);transform-origin:0 50%;-webkit-text-stroke:0.18px #0b0b0b;">Share</span>
<span class="t" style="font-family:'Liberation Sans', sans-serif;font-size:9.3px;color:#6d6d6d;left:24.61px;top:88.00px;transform:scaleX(0.8358);transform-origin:0 50%;-webkit-text-stroke:0.18px #6d6d6d;">Paste</span>
<span class="t" style="font-family:'Liberation Sans', sans-serif;font-size:9.3px;color:#f2f2f2;left:67.56px;top:64.00px;transform:scaleX(0.9454);transform-origin:0 50%;-webkit-text-stroke:0.18px #f2f2f2;">Cut</span>
<span class="t" style="font-family:'Liberation Sans', sans-serif;font-size:9.3px;color:#f2f2f2;left:67.56px;top:82.00px;transform:scaleX(0.9428);transform-origin:0 50%;-webkit-text-stroke:0.18px #f2f2f2;">Copy</span>
<span class="t" style="font-family:'Liberation Sans', sans-serif;font-size:9.3px;color:#f2f2f2;left:67.78px;top:101.00px;transform:scaleX(0.9083);transform-origin:0 50%;-webkit-text-stroke:0.18px #f2f2f2;">Format Painter</span>
<span class="t" style="font-family:'Liberation Sans', sans-serif;font-size:8.9px;color:#d9d9d9;left:51.91px;top:116.00px;transform:scaleX(0.8758);transform-origin:0 50%;-webkit-text-stroke:0.18px #d9d9d9;">Clipboard</span>
<span class="t" style="font-family:'Liberation Sans', sans-serif;font-size:9.3px;color:#f2f2f2;left:142.77px;top:69.00px;transform:scaleX(0.9145);transform-origin:0 50%;-webkit-text-stroke:0.18px #f2f2f2;">Tahoma</span>
<span class="t" style="font-family:'Liberation Sans', sans-serif;font-size:9.3px;color:#f2f2f2;left:-66.10px;width:600px;text-align:center;top:69.00px;-webkit-text-stroke:0.18px #f2f2f2;">8</span>
<span class="t" style="font-family:'Liberation Sans', sans-serif;font-size:12px;color:#f2f2f2;left:-30.50px;width:600px;text-align:center;top:69.00px;">A</span>
<span class="t" style="font-family:'Liberation Sans', sans-serif;font-size:10px;color:#f2f2f2;left:-11.70px;width:600px;text-align:center;top:71.00px;-webkit-text-stroke:0.18px #f2f2f2;">A</span>
<span class="t" style="font-family:'Liberation Sans', sans-serif;font-size:10.2px;color:#f2f2f2;font-weight:700;left:-150.20px;width:600px;text-align:center;top:93.00px;">B</span>
<span class="t" style="font-family:'Liberation Serif', serif;font-size:10.2px;color:#f2f2f2;font-style:italic;letter-spacing:-0.406px;left:166.60px;top:93.00px;">I</span>
<span class="t" style="font-family:'Liberation Sans', sans-serif;font-size:9.8px;color:#f2f2f2;text-decoration:underline;left:-113.30px;width:600px;text-align:center;top:92.00px;-webkit-text-stroke:0.18px #f2f2f2;">U</span>
<span class="t" style="font-family:'Liberation Sans', sans-serif;font-size:10.4px;color:#f2f2f2;left:-21.60px;width:600px;text-align:center;top:92.00px;-webkit-text-stroke:0.18px #f2f2f2;">A</span>
<span class="t" style="font-family:'Liberation Sans', sans-serif;font-size:8.9px;color:#d9d9d9;left:205.61px;top:116.00px;transform:scaleX(0.8829);transform-origin:0 50%;-webkit-text-stroke:0.18px #d9d9d9;">Font</span>
<span class="t" style="font-family:'Liberation Sans', sans-serif;font-size:9.3px;color:#f2f2f2;left:429.27px;top:69.00px;transform:scaleX(0.9190);transform-origin:0 50%;-webkit-text-stroke:0.18px #f2f2f2;">Wrap Text</span>
<span class="t" style="font-family:'Liberation Sans', sans-serif;font-size:9.3px;color:#f2f2f2;left:429.27px;top:92.00px;transform:scaleX(0.9228);transform-origin:0 50%;-webkit-text-stroke:0.18px #f2f2f2;">Merge &amp; Center</span>
<span class="t" style="font-family:'Liberation Sans', sans-serif;font-size:8.9px;color:#d9d9d9;left:387.70px;top:116.00px;transform:scaleX(0.8943);transform-origin:0 50%;-webkit-text-stroke:0.18px #d9d9d9;">Alignment</span>
<span class="t" style="font-family:'Liberation Sans', sans-serif;font-size:9.3px;color:#f2f2f2;left:526.80px;top:69.00px;transform:scaleX(0.8585);transform-origin:0 50%;-webkit-text-stroke:0.18px #f2f2f2;">General</span>
<span class="t" style="font-family:'Liberation Sans', sans-serif;font-size:11.4px;color:#e6e6e6;left:233.40px;width:600px;text-align:center;top:92.00px;-webkit-text-stroke:0.18px #e6e6e6;">$</span>
<span class="t" style="font-family:'Liberation Sans', sans-serif;font-size:11.8px;color:#e6e6e6;left:262.30px;width:600px;text-align:center;top:92.00px;-webkit-text-stroke:0.18px #e6e6e6;">%</span>
<span class="t" style="font-family:'Liberation Serif', serif;font-size:32px;color:#e6e6e6;font-weight:700;left:281.50px;width:600px;text-align:center;top:81.00px;">,</span>
<span class="t" style="font-family:'Liberation Sans', sans-serif;font-size:8.9px;color:#d9d9d9;left:556.50px;top:116.00px;transform:scaleX(0.9026);transform-origin:0 50%;-webkit-text-stroke:0.18px #d9d9d9;">Number</span>
<span class="t" style="font-family:'Liberation Sans', sans-serif;font-size:9.3px;color:#f2f2f2;left:644.66px;top:88.00px;transform:scaleX(0.9357);transform-origin:0 50%;-webkit-text-stroke:0.18px #f2f2f2;">Insert</span>
<span class="t" style="font-family:'Liberation Sans', sans-serif;font-size:9.3px;color:#f2f2f2;left:674.36px;top:88.00px;transform:scaleX(0.9443);transform-origin:0 50%;-webkit-text-stroke:0.18px #f2f2f2;">Delete</span>
<span class="t" style="font-family:'Liberation Sans', sans-serif;font-size:9.3px;color:#f2f2f2;left:704.55px;top:87.00px;transform:scaleX(0.9711);transform-origin:0 50%;-webkit-text-stroke:0.18px #f2f2f2;">Format</span>
<span class="t" style="font-family:'Liberation Sans', sans-serif;font-size:8.9px;color:#d9d9d9;left:678.72px;top:116.00px;transform:scaleX(0.8438);transform-origin:0 50%;-webkit-text-stroke:0.18px #d9d9d9;">Cells</span>
<span class="t" style="font-family:'Liberation Sans', sans-serif;font-size:9.3px;color:#f2f2f2;left:762.56px;top:64.00px;transform:scaleX(0.9432);transform-origin:0 50%;-webkit-text-stroke:0.18px #f2f2f2;">AutoSum</span>
<span class="t" style="font-family:'Liberation Sans', sans-serif;font-size:9.3px;color:#f2f2f2;left:762.58px;top:82.00px;transform:scaleX(0.9124);transform-origin:0 50%;-webkit-text-stroke:0.18px #f2f2f2;">Fill</span>
<span class="t" style="font-family:'Liberation Sans', sans-serif;font-size:9.3px;color:#f2f2f2;left:762.59px;top:101.00px;transform:scaleX(0.8737);transform-origin:0 50%;-webkit-text-stroke:0.18px #f2f2f2;">Clear</span>
<span class="t" style="font-family:'Liberation Sans', sans-serif;font-size:9.3px;color:#f2f2f2;left:825.94px;top:87.00px;transform:scaleX(0.9914);transform-origin:0 50%;-webkit-text-stroke:0.18px #f2f2f2;">Sort &amp;</span>
<span class="t" style="font-family:'Liberation Sans', sans-serif;font-size:9.3px;color:#f2f2f2;left:825.44px;top:99.00px;transform:scaleX(0.9827);transform-origin:0 50%;-webkit-text-stroke:0.18px #f2f2f2;">Filter</span>
<span class="t" style="font-family:'Liberation Sans', sans-serif;font-size:9.3px;color:#f2f2f2;left:859.24px;top:87.00px;transform:scaleX(0.9790);transform-origin:0 50%;-webkit-text-stroke:0.18px #f2f2f2;">Find &amp;</span>
<span class="t" style="font-family:'Liberation Sans', sans-serif;font-size:9.3px;color:#f2f2f2;left:856.99px;top:99.00px;transform:scaleX(0.8790);transform-origin:0 50%;-webkit-text-stroke:0.18px #f2f2f2;">Select</span>
<span class="t" style="font-family:'Liberation Sans', sans-serif;font-size:8.9px;color:#d9d9d9;left:805.42px;top:116.00px;transform:scaleX(0.8609);transform-origin:0 50%;-webkit-text-stroke:0.18px #d9d9d9;">Editing</span>
<span class="t" style="font-family:'Liberation Sans', sans-serif;font-size:9.3px;color:#f2f2f2;left:902.75px;top:87.00px;transform:scaleX(0.9640);transform-origin:0 50%;-webkit-text-stroke:0.18px #f2f2f2;">Add-ins</span>
<span class="t" style="font-family:'Liberation Sans', sans-serif;font-size:8.9px;color:#d9d9d9;left:904.11px;top:116.00px;transform:scaleX(0.8800);transform-origin:0 50%;-webkit-text-stroke:0.18px #d9d9d9;">Add-ins</span>
<span class="t" style="font-family:'Liberation Sans', sans-serif;font-size:9.3px;color:#f2f2f2;left:948.17px;top:87.00px;transform:scaleX(0.9145);transform-origin:0 50%;-webkit-text-stroke:0.18px #f2f2f2;">Analyze</span>
<span class="t" style="font-family:'Liberation Sans', sans-serif;font-size:9.3px;color:#f2f2f2;left:954.48px;top:99.00px;transform:scaleX(0.8979);transform-origin:0 50%;-webkit-text-stroke:0.18px #f2f2f2;">Data</span>
<span class="t" style="font-family:'Liberation Sans', sans-serif;font-size:23.0px;color:#fff;font-weight:700;left:1097.69px;top:76.00px;transform:scaleX(1.0516);transform-origin:0 50%;-webkit-text-stroke:0.7px #fff;">FINM</span>
<span class="t" style="font-family:'Liberation Sans', sans-serif;font-size:23.0px;color:#fff;font-weight:700;left:1176.59px;top:76.00px;transform:scaleX(0.8747);transform-origin:0 50%;-webkit-text-stroke:0.7px #fff;">DELSLAB</span>
<span class="t" style="font-family:'Liberation Sans',sans-serif;font-size:16.4px;color:#fff;letter-spacing:11.987px;left:1100.40px;top:98.00px;">Templates</span>
<span class="t" style="font-family:'Liberation Sans',sans-serif;font-size:7.6px;color:#e4e4e4;letter-spacing:0.208px;left:65.60px;top:802.00px;">•••</span>
<span class="t" style="font-family:'Liberation Sans', sans-serif;font-size:10.6px;color:#1d1d1d;left:90.81px;top:803.00px;transform:scaleX(0.9191);transform-origin:0 50%;-webkit-text-stroke:0.18px #1d1d1d;">Revenue</span>
<span class="t" style="font-family:'Liberation Sans', sans-serif;font-size:10.6px;color:#1d1d1d;left:147.54px;top:803.00px;transform:scaleX(0.8672);transform-origin:0 50%;-webkit-text-stroke:0.18px #1d1d1d;">COGS &amp; OPEX</span>
<span class="t" style="font-family:'Liberation Sans', sans-serif;font-size:10.6px;color:#1d1d1d;left:229.29px;top:803.00px;transform:scaleX(0.9639);transform-origin:0 50%;-webkit-text-stroke:0.18px #1d1d1d;">Payroll</span>
<span class="t" style="font-family:'Liberation Sans', sans-serif;font-size:10.6px;color:#1d1d1d;left:278.46px;top:803.00px;transform:scaleX(0.8290);transform-origin:0 50%;-webkit-text-stroke:0.18px #1d1d1d;">CAPEX</span>
<span class="t" style="font-family:'Liberation Sans', sans-serif;font-size:10.6px;color:#1d1d1d;left:325.89px;top:803.00px;transform:scaleX(0.9656);transform-origin:0 50%;-webkit-text-stroke:0.18px #1d1d1d;">CapTable</span>
<span class="t" style="font-family:'Liberation Sans', sans-serif;font-size:10.6px;color:#1d1d1d;left:386.80px;top:803.00px;transform:scaleX(0.9523);transform-origin:0 50%;-webkit-text-stroke:0.18px #1d1d1d;">Capital</span>
<span class="t" style="font-family:'Liberation Sans', sans-serif;font-size:10.6px;color:#1d1d1d;left:436.16px;top:803.00px;transform:scaleX(0.8375);transform-origin:0 50%;-webkit-text-stroke:0.18px #1d1d1d;">IS</span>
<span class="t" style="font-family:'Liberation Sans', sans-serif;font-size:10.6px;color:#1d1d1d;left:462.38px;top:803.00px;transform:scaleX(0.7884);transform-origin:0 50%;-webkit-text-stroke:0.18px #1d1d1d;">CF</span>
<span class="t" style="font-family:'Liberation Sans', sans-serif;font-size:10.6px;color:#1d1d1d;left:491.57px;top:803.00px;transform:scaleX(0.8104);transform-origin:0 50%;-webkit-text-stroke:0.18px #1d1d1d;">BS</span>
<span class="t" style="font-family:'Liberation Sans', sans-serif;font-size:10.6px;color:#1d1d1d;left:520.81px;top:803.00px;transform:scaleX(0.9229);transform-origin:0 50%;-webkit-text-stroke:0.18px #1d1d1d;">Scenarios</span>
<span class="t" style="font-family:'Liberation Sans', sans-serif;font-size:10.6px;color:#1d1d1d;left:581.97px;top:803.00px;transform:scaleX(1.0016);transform-origin:0 50%;-webkit-text-stroke:0.18px #1d1d1d;">Valuation</span>
<span class="t" style="font-family:'Liberation Sans', sans-serif;font-size:10.6px;color:#1d1d1d;left:643.19px;top:803.00px;transform:scaleX(0.9578);transform-origin:0 50%;-webkit-text-stroke:0.18px #1d1d1d;">Summary</span>
<span class="t" style="font-family:'Liberation Sans', sans-serif;font-size:10.6px;color:#1d1d1d;left:704.39px;top:803.00px;transform:scaleX(0.7798);transform-origin:0 50%;-webkit-text-stroke:0.18px #1d1d1d;">BE</span>
<span class="t" style="font-family:'Liberation Sans', sans-serif;font-size:10.6px;color:#1d1d1d;left:733.24px;top:803.00px;transform:scaleX(0.8614);transform-origin:0 50%;-webkit-text-stroke:0.18px #1d1d1d;">ROIC</span>
<span class="t" style="font-family:'Liberation Sans', sans-serif;font-size:10.6px;color:#1d1d1d;left:774.00px;top:803.00px;transform:scaleX(0.9355);transform-origin:0 50%;-webkit-text-stroke:0.18px #1d1d1d;">Charts</span>
<span class="t" style="font-family:'Liberation Sans', sans-serif;font-size:10.6px;color:#1d1d1d;left:820.95px;top:803.00px;transform:scaleX(0.8445);transform-origin:0 50%;-webkit-text-stroke:0.18px #1d1d1d;">KPIs</span>
<span class="t" style="font-family:'Liberation Sans', sans-serif;font-size:10.6px;color:#1d1d1d;left:857.61px;top:803.00px;transform:scaleX(0.9240);transform-origin:0 50%;-webkit-text-stroke:0.18px #1d1d1d;">Sources &amp; Uses</span>
<span class="t" style="font-family:'Liberation Sans', sans-serif;font-size:10.6px;color:#1a1a1a;left:944.68px;top:801.00px;transform:scaleX(0.9734);transform-origin:0 50%;-webkit-text-stroke:0.25px #1a1a1a;">Ratios</span>
<span class="t" style="font-family:'Liberation Sans',sans-serif;font-size:7.6px;color:#e4e4e4;letter-spacing:0.208px;left:999.40px;top:802.00px;">•••</span>
<span class="t" style="font-family:'Liberation Sans', sans-serif;font-size:8.6px;color:#d2d2d2;left:12.54px;top:821.00px;transform:scaleX(0.8464);transform-origin:0 50%;-webkit-text-stroke:0.18px #d2d2d2;">Ready</span>
<span class="t" style="font-family:'Liberation Sans', sans-serif;font-size:8.4px;color:#e6e6e6;font-weight:700;left:82.82px;top:821.00px;transform:scaleX(0.9009);transform-origin:0 50%;">Accessibility: Investigate</span>
<span class="t" style="font-family:'Liberation Sans', sans-serif;font-size:8.6px;color:#d2d2d2;left:1360.12px;top:821.00px;transform:scaleX(0.8787);transform-origin:0 50%;-webkit-text-stroke:0.18px #d2d2d2;">117%</span>
</div>
</body></html>
